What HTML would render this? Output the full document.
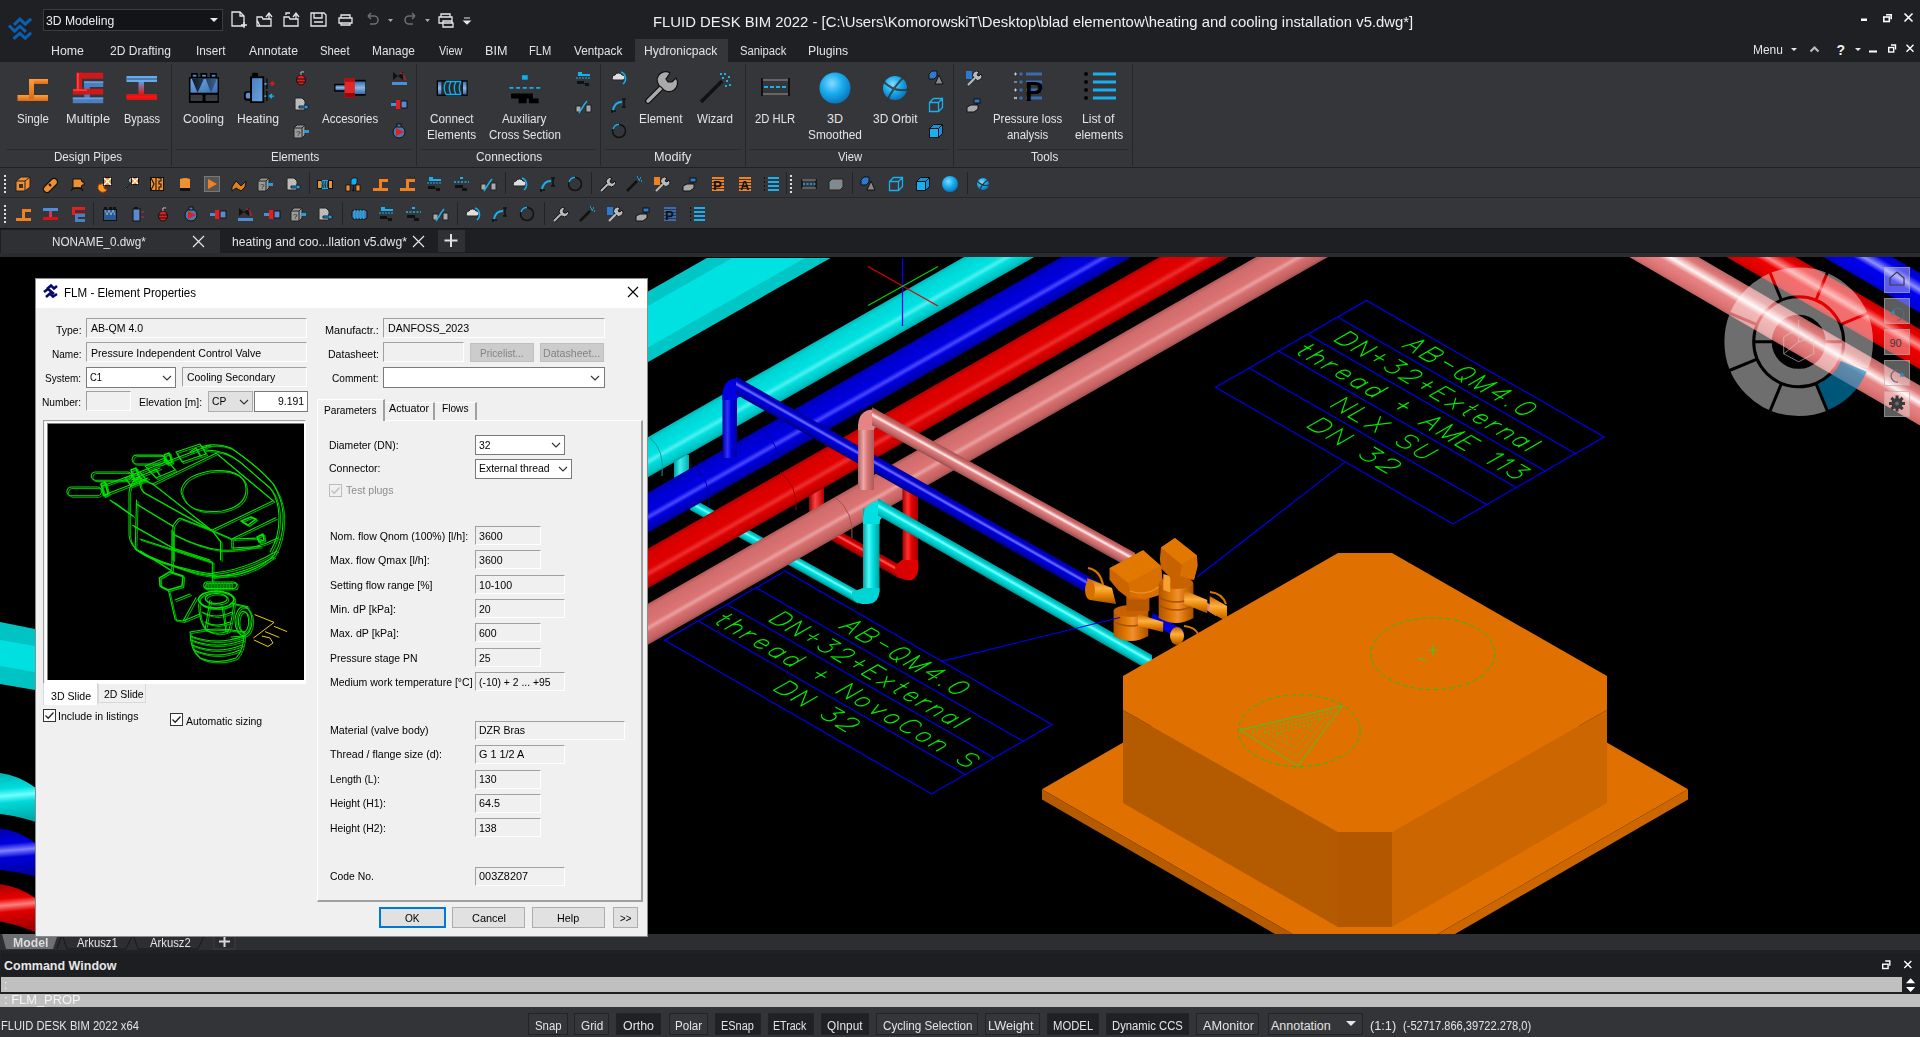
<!DOCTYPE html>
<html><head><meta charset="utf-8"><title>FLUID DESK BIM 2022</title><style>html,body{margin:0;padding:0}
body{width:1920px;height:1037px;overflow:hidden;position:relative;background:#1f2024;font-family:"Liberation Sans",sans-serif}
body>*{position:absolute}
.tx{white-space:nowrap;line-height:1;transform-origin:0 0}
</style></head><body>
<div style="left:0px;top:0px;width:1920px;height:62px;background:#1f2024"></div>
<svg style="left:0px;top:10px" width="45" height="35" viewBox="0 10 45 35">
<g fill="none" stroke="#0a5fb2" stroke-width="3" stroke-linecap="square" stroke-linejoin="miter">
<path d="M15 23.8 L19.9 19.1 L25.2 24.2 L30 19.8"/><path d="M10 26.6 L14.6 31.1 L19.9 26.2 L24.8 30.8"/><path d="M14.6 37.9 L19.9 33.3 L25.2 38.3 L30 33.8"/>
</g></svg>
<div style="left:43px;top:9px;width:178px;height:20px;background:#131418;border:1px solid #3b3c40"></div>
<span class="tx" style="left:46.00px;top:14.00px;font-size:13px;color:#ececec;transform:scaleX(0.9346);">3D Modeling</span>
<svg style="left:210px;top:18px" width="8" height="5"><path d="M0 0 L8 0 L4 4Z" fill="#e8e8e8"/></svg>
<svg style="left:228px;top:8px" width="250" height="24" viewBox="228 8 250 24">
<g fill="none" stroke="#e6e6e6" stroke-width="1.3">
<path d="M232 12 h8 l4 4 v10 h-12z M240 12 v4 h4"/><path d="M244 22 v6 M241 25 h6"/>
<path d="M257 17 h5 l1 2 h8 v7 h-14z M257 20 l3 6"/><path d="M266 17 l3-4 l3 4 M269 13 v6"/>
<path d="M284 17 h5 l1 2 h8 v7 h-14z"/><path d="M293 17 l3-4 l3 4 M296 13 v6" /><path d="M286 15 v-2 h4"/>
<path d="M311 13 h13 l2 2 v11 h-15z M314 13 v5 h8 v-5 M314 22 h9"/>
<path d="M339 18 h13 v5 h-13z M341 18 v-3 h9 v3 M341 23 v2 h9 v-2"/>
</g>
<g fill="none" stroke="#6b6c70" stroke-width="1.6"><path d="M368 16 h6 a4 4 0 0 1 0 8 h-4 M368 16 l3-3 M368 16 l3 3"/><path d="M415 16 h-6 a4 4 0 0 0 0 8 h4 M415 16 l-3-3 M415 16 l-3 3"/></g>
<path d="M388 19 h5 l-2.5 3z M425 19 h5 l-2.5 3z" fill="#aaa"/>
<g fill="none" stroke="#e6e6e6" stroke-width="1.3"><path d="M439 17 h13 v6 h-13z M441 17 v-3 h9 v3 M443 21 h8 l2 2 v4 h-10z"/></g>
<path d="M464 18 h6 M464 21 h6 l-3 3z" stroke="#e6e6e6" fill="#e6e6e6" stroke-width="1.2"/>
</svg>
<span class="tx" style="left:652.79px;top:14.01px;font-size:15.5px;color:#f0f0f0;transform:scaleX(0.9592);">FLUID DESK BIM 2022 - [C:\Users\KomorowskiT\Desktop\blad elementow\heating and cooling installation v5.dwg*]</span>
<svg style="left:1855px;top:8px" width="65" height="20" viewBox="1855 8 65 20">
<rect x="1861" y="18.5" width="6" height="2.5" fill="#fff"/>
<g fill="none" stroke="#fff" stroke-width="1.6"><rect x="1883.8" y="17" width="5.5" height="4.5"/><path d="M1886 14.8 h5.2 v4.5"/>
<path d="M1904.5 13.5 l8 8 M1912.5 13.5 l-8 8"/></g></svg>
<div style="left:635px;top:39px;width:93px;height:23px;background:#34363a"></div>
<span class="tx" style="left:51.01px;top:45.01px;font-size:12.5px;color:#e4e4e4;transform:scaleX(0.9879);">Home</span>
<span class="tx" style="left:110.00px;top:45.01px;font-size:12.5px;color:#e4e4e4;transform:scaleX(0.9641);">2D Drafting</span>
<span class="tx" style="left:196.06px;top:45.01px;font-size:12.5px;color:#e4e4e4;transform:scaleX(0.9419);">Insert</span>
<span class="tx" style="left:249.00px;top:45.01px;font-size:12.5px;color:#e4e4e4;transform:scaleX(0.9782);">Annotate</span>
<span class="tx" style="left:320.00px;top:45.01px;font-size:12.5px;color:#e4e4e4;transform:scaleX(0.9038);">Sheet</span>
<span class="tx" style="left:372.05px;top:45.01px;font-size:12.5px;color:#e4e4e4;transform:scaleX(0.9498);">Manage</span>
<span class="tx" style="left:439.00px;top:45.01px;font-size:12.5px;color:#e4e4e4;transform:scaleX(0.8621);">View</span>
<span class="tx" style="left:484.99px;top:45.01px;font-size:12.5px;color:#e4e4e4;transform:scaleX(1.0091);">BIM</span>
<span class="tx" style="left:529.11px;top:45.01px;font-size:12.5px;color:#e4e4e4;transform:scaleX(0.8903);">FLM</span>
<span class="tx" style="left:574.00px;top:45.01px;font-size:12.5px;color:#e4e4e4;transform:scaleX(0.9391);">Ventpack</span>
<span class="tx" style="left:644.03px;top:45.01px;font-size:12.5px;color:#e4e4e4;transform:scaleX(0.9672);">Hydronicpack</span>
<span class="tx" style="left:740.00px;top:45.01px;font-size:12.5px;color:#e4e4e4;transform:scaleX(0.9009);">Sanipack</span>
<span class="tx" style="left:808.02px;top:45.01px;font-size:12.5px;color:#e4e4e4;transform:scaleX(0.9812);">Plugins</span>
<span class="tx" style="left:1753.04px;top:44.01px;font-size:12.5px;color:#e4e4e4;transform:scaleX(0.9566);">Menu</span>
<svg style="left:1785px;top:40px" width="135" height="20" viewBox="1785 40 135 20">
<path d="M1791 48 h6 l-3 3z M1855 48 h6 l-3 3z" fill="#e6e6e6"/>
<path d="M1810.5 51.5 l4-4 l4 4" fill="none" stroke="#bbb" stroke-width="2.2"/>
<rect x="1869" y="50.5" width="8" height="2" fill="#fff"/>
<g fill="none" stroke="#fff" stroke-width="1.4"><rect x="1888.7" y="47.5" width="5" height="4.5"/><path d="M1891 45 h4.5 v4.5"/><path d="M1906.5 44.8 l7 7 M1913.5 44.8 l-7 7"/></g>
</svg>
<span class="tx" style="left:1836.50px;top:43.01px;font-size:14px;color:#f0f0f0;font-weight:bold;">?</span>
<div style="left:0px;top:62px;width:1920px;height:106px;background:#34363a"></div>
<div style="left:0px;top:167px;width:1920px;height:1px;background:#1f2024"></div>
<div style="left:171px;top:64px;width:1px;height:102px;background:#25262a"></div>
<div style="left:416px;top:64px;width:1px;height:102px;background:#25262a"></div>
<div style="left:600px;top:64px;width:1px;height:102px;background:#25262a"></div>
<div style="left:745px;top:64px;width:1px;height:102px;background:#25262a"></div>
<div style="left:953px;top:64px;width:1px;height:102px;background:#25262a"></div>
<div style="left:1132px;top:64px;width:1px;height:102px;background:#25262a"></div>
<div style="left:6px;top:149px;width:162px;height:1px;background:#2a2b2f"></div>
<div style="left:175px;top:149px;width:238px;height:1px;background:#2a2b2f"></div>
<div style="left:420px;top:149px;width:177px;height:1px;background:#2a2b2f"></div>
<div style="left:604px;top:149px;width:138px;height:1px;background:#2a2b2f"></div>
<div style="left:749px;top:149px;width:201px;height:1px;background:#2a2b2f"></div>
<div style="left:957px;top:149px;width:172px;height:1px;background:#2a2b2f"></div>
<span class="tx" style="left:54.07px;top:151.01px;font-size:12.5px;color:#e4e4e4;transform:scaleX(0.9254);">Design Pipes</span>
<span class="tx" style="left:271.08px;top:151.01px;font-size:12.5px;color:#e4e4e4;transform:scaleX(0.9242);">Elements</span>
<span class="tx" style="left:476.00px;top:151.01px;font-size:12.5px;color:#e4e4e4;transform:scaleX(0.9532);">Connections</span>
<span class="tx" style="left:653.99px;top:151.01px;font-size:12.5px;color:#e4e4e4;transform:scaleX(1.0119);">Modify</span>
<span class="tx" style="left:838.00px;top:151.01px;font-size:12.5px;color:#e4e4e4;transform:scaleX(0.8980);">View</span>
<span class="tx" style="left:1031.00px;top:151.01px;font-size:12.5px;color:#e4e4e4;transform:scaleX(0.9333);">Tools</span>
<span class="tx" style="left:17.00px;top:113.00px;font-size:12.5px;color:#e4e4e4;transform:scaleX(0.9197);">Single</span>
<span class="tx" style="left:65.98px;top:113.00px;font-size:12.5px;color:#e4e4e4;transform:scaleX(1.0209);">Multiple</span>
<span class="tx" style="left:124.12px;top:113.00px;font-size:12.5px;color:#e4e4e4;transform:scaleX(0.8807);">Bypass</span>
<span class="tx" style="left:183.00px;top:113.00px;font-size:12.5px;color:#e4e4e4;transform:scaleX(0.9661);">Cooling</span>
<span class="tx" style="left:237.03px;top:113.00px;font-size:12.5px;color:#e4e4e4;transform:scaleX(0.9731);">Heating</span>
<span class="tx" style="left:322.00px;top:113.00px;font-size:12.5px;color:#e4e4e4;transform:scaleX(0.9198);">Accesories</span>
<span class="tx" style="left:430.00px;top:113.00px;font-size:12.5px;color:#e4e4e4;transform:scaleX(0.9345);">Connect</span>
<span class="tx" style="left:502.00px;top:113.00px;font-size:12.5px;color:#e4e4e4;transform:scaleX(0.9378);">Auxiliary</span>
<span class="tx" style="left:639.05px;top:113.00px;font-size:12.5px;color:#e4e4e4;transform:scaleX(0.9475);">Element</span>
<span class="tx" style="left:697.00px;top:113.00px;font-size:12.5px;color:#e4e4e4;transform:scaleX(0.9245);">Wizard</span>
<span class="tx" style="left:755.00px;top:113.00px;font-size:12.5px;color:#e4e4e4;transform:scaleX(0.9003);">2D HLR</span>
<span class="tx" style="left:827.00px;top:113.00px;font-size:12.5px;color:#e4e4e4;">3D</span>
<span class="tx" style="left:873.00px;top:113.00px;font-size:12.5px;color:#e4e4e4;transform:scaleX(0.9561);">3D Orbit</span>
<span class="tx" style="left:993.09px;top:113.00px;font-size:12.5px;color:#e4e4e4;transform:scaleX(0.9131);">Pressure loss</span>
<span class="tx" style="left:1082.03px;top:113.00px;font-size:12.5px;color:#e4e4e4;transform:scaleX(0.9733);">List of</span>
<span class="tx" style="left:427.06px;top:129.00px;font-size:12.5px;color:#e4e4e4;transform:scaleX(0.9438);">Elements</span>
<span class="tx" style="left:489.00px;top:129.00px;font-size:12.5px;color:#e4e4e4;transform:scaleX(0.9248);">Cross Section</span>
<span class="tx" style="left:808.00px;top:129.00px;font-size:12.5px;color:#e4e4e4;transform:scaleX(0.9469);">Smoothed</span>
<span class="tx" style="left:1007.00px;top:129.00px;font-size:12.5px;color:#e4e4e4;transform:scaleX(0.9129);">analysis</span>
<span class="tx" style="left:1075.00px;top:129.00px;font-size:12.5px;color:#e4e4e4;transform:scaleX(0.9511);">elements</span>
<div style="left:0px;top:168px;width:1920px;height:60px;background:#34363a"></div>
<div style="left:0px;top:197px;width:1920px;height:1px;background:#27282c"></div>
<div style="left:0px;top:228px;width:1920px;height:2px;background:#141518"></div>
<div style="left:0px;top:229px;width:1920px;height:27px;background:#1e1f23"></div>
<div style="left:1px;top:230px;width:219px;height:23px;background:#2f3034"></div>
<div style="left:438px;top:230px;width:27px;height:22px;background:#2f3034"></div>
<span class="tx" style="left:52.06px;top:236.00px;font-size:12.5px;color:#e4e4e4;transform:scaleX(0.9378);">NONAME_0.dwg*</span>
<span class="tx" style="left:231.60px;top:236.00px;font-size:12.5px;color:#e4e4e4;transform:scaleX(0.9716);">heating and coo...llation v5.dwg*</span>
<svg style="left:180px;top:230px" width="300" height="24" viewBox="180 230 300 24">
<g stroke="#e6e6e6" stroke-width="1.2" fill="none"><path d="M193 236 l11 11 M204 236 l-11 11"/><path d="M413 236 l11 11 M424 236 l-11 11"/></g>
<path d="M451 234 v13 M444.5 240.5 h13" stroke="#e0e0e0" stroke-width="2"/></svg>
<div style="left:465px;top:252px;width:1455px;height:1px;background:#17181b"></div>
<div style="left:0px;top:253px;width:1920px;height:4px;background:#2b2c30"></div>
<div style="left:0px;top:257px;width:1920px;height:677px;background:#000"></div>
<div style="left:0px;top:934px;width:1920px;height:16px;background:#2d2e32"></div>
<svg style="left:0px;top:934px" width="240" height="16" viewBox="0 934 240 16">
<path d="M2 934 L6 949 H53 L58 934Z" fill="#6e6f73"/>
<g fill="none" stroke="#19191c" stroke-width="1"><path d="M57 949 L62 934 L67 949 H126 L133 934"/><path d="M133 934 L138 949 H198 L205 934"/></g>
<rect x="214" y="934" width="21" height="15" fill="#2a2b2e" stroke="#3d3e42"/>
<path d="M224.5 936 v11 M219 941.5 h11" stroke="#d8d8d8" stroke-width="2"/></svg>
<span class="tx" style="left:13.00px;top:937.01px;font-size:12px;color:#dcdcdc;font-weight:bold;transform:scaleX(1.0195);">Model</span>
<span class="tx" style="left:77.00px;top:937.01px;font-size:12px;color:#e4e4e4;transform:scaleX(0.9388);">Arkusz1</span>
<span class="tx" style="left:150.00px;top:937.01px;font-size:12px;color:#e4e4e4;transform:scaleX(0.9388);">Arkusz2</span>
<div style="left:0px;top:950px;width:1920px;height:58px;background:#202125"></div>
<div style="left:1px;top:953px;width:1919px;height:23px;background:#1d1e21"></div>
<span class="tx" style="left:4.00px;top:960.01px;font-size:12.5px;color:#e8e8e8;font-weight:bold;">Command Window</span>
<div style="left:1px;top:977px;width:1901px;height:15px;background:#c0c0c0"></div>
<div style="left:1902px;top:977px;width:18px;height:15px;background:#1d1e21"></div>
<div style="left:0px;top:994px;width:1920px;height:13px;background:#c0c0c0"></div>
<span class="tx" style="left:4.01px;top:993.00px;font-size:13px;color:#f4f4f4;transform:scaleX(0.9917);">: FLM_PROP</span>
<span class="tx" style="left:4.00px;top:979.01px;font-size:12px;color:#f0f0f0;">:</span>
<svg style="left:1875px;top:955px" width="45" height="40" viewBox="1875 955 45 40">
<g fill="none" stroke="#fff" stroke-width="1.4"><rect x="1882.7" y="964.2" width="5.4" height="4.3"/><path d="M1885.2 961 h4.6 v4.8"/><path d="M1904.3 961 l7 7 M1911.3 961 l-7 7"/></g>
<path d="M1906 983.2 l4.6-5 l4.6 5z M1906 987 l4.6 5 l4.6-5z" fill="#fff"/></svg>
<div style="left:0px;top:1007px;width:1920px;height:30px;background:#323438"></div>
<span class="tx" style="left:1.11px;top:1020.01px;font-size:12.5px;color:#e4e4e4;transform:scaleX(0.8938);">FLUID DESK BIM 2022 x64</span>
<div style="left:528px;top:1013px;width:40px;height:22px;background:#35363a;border:1px solid #222327;box-sizing:border-box"></div>
<div style="left:574px;top:1013px;width:35px;height:22px;background:#35363a;border:1px solid #222327;box-sizing:border-box"></div>
<div style="left:616px;top:1013px;width:45px;height:22px;background:#202125;border:1px solid #222327;box-sizing:border-box"></div>
<div style="left:669px;top:1013px;width:39px;height:22px;background:#35363a;border:1px solid #222327;box-sizing:border-box"></div>
<div style="left:715px;top:1013px;width:46px;height:22px;background:#202125;border:1px solid #222327;box-sizing:border-box"></div>
<div style="left:768px;top:1013px;width:46px;height:22px;background:#202125;border:1px solid #222327;box-sizing:border-box"></div>
<div style="left:821px;top:1013px;width:48px;height:22px;background:#202125;border:1px solid #222327;box-sizing:border-box"></div>
<div style="left:876px;top:1013px;width:102px;height:22px;background:#35363a;border:1px solid #222327;box-sizing:border-box"></div>
<div style="left:985px;top:1013px;width:55px;height:22px;background:#35363a;border:1px solid #222327;box-sizing:border-box"></div>
<div style="left:1047px;top:1013px;width:52px;height:22px;background:#202125;border:1px solid #222327;box-sizing:border-box"></div>
<div style="left:1106px;top:1013px;width:83px;height:22px;background:#202125;border:1px solid #222327;box-sizing:border-box"></div>
<div style="left:1196px;top:1013px;width:63px;height:22px;background:#35363a;border:1px solid #222327;box-sizing:border-box"></div>
<span class="tx" style="left:534.60px;top:1020.00px;font-size:12.5px;color:#e4e4e4;transform:scaleX(0.9097);">Snap</span>
<span class="tx" style="left:580.70px;top:1020.00px;font-size:12.5px;color:#e4e4e4;transform:scaleX(0.9424);">Grid</span>
<span class="tx" style="left:623.00px;top:1020.00px;font-size:12.5px;color:#e4e4e4;transform:scaleX(0.9901);">Ortho</span>
<span class="tx" style="left:675.07px;top:1020.00px;font-size:12.5px;color:#e4e4e4;transform:scaleX(0.9280);">Polar</span>
<span class="tx" style="left:721.13px;top:1020.00px;font-size:12.5px;color:#e4e4e4;transform:scaleX(0.8748);">ESnap</span>
<span class="tx" style="left:773.15px;top:1020.00px;font-size:12.5px;color:#e4e4e4;transform:scaleX(0.8489);">ETrack</span>
<span class="tx" style="left:827.00px;top:1020.00px;font-size:12.5px;color:#e4e4e4;transform:scaleX(0.9461);">QInput</span>
<span class="tx" style="left:882.50px;top:1020.00px;font-size:12.5px;color:#e4e4e4;transform:scaleX(0.9330);">Cycling Selection</span>
<span class="tx" style="left:987.98px;top:1020.00px;font-size:12.5px;color:#e4e4e4;transform:scaleX(1.0174);">LWeight</span>
<span class="tx" style="left:1052.80px;top:1020.00px;font-size:12.5px;color:#e4e4e4;transform:scaleX(0.9034);">MODEL</span>
<span class="tx" style="left:1112.10px;top:1020.00px;font-size:12.5px;color:#e4e4e4;transform:scaleX(0.9022);">Dynamic CCS</span>
<span class="tx" style="left:1202.60px;top:1020.00px;font-size:12.5px;color:#e4e4e4;transform:scaleX(1.0209);">AMonitor</span>
<div style="left:1268px;top:1013px;width:95px;height:22px;background:#35363a;border:1px solid #222327;box-sizing:border-box"></div>
<svg style="left:1345px;top:1020px" width="12" height="8"><path d="M1 1 h10 l-5 5z" fill="#e6e6e6"/></svg>
<span class="tx" style="left:1271.00px;top:1020.01px;font-size:12.5px;color:#e4e4e4;">Annotation</span>
<span class="tx" style="left:1370.00px;top:1020.01px;font-size:12.5px;color:#e4e4e4;transform:scaleX(1.0180);">(1:1)</span>
<span class="tx" style="left:1403.00px;top:1020.01px;font-size:12.5px;color:#e4e4e4;transform:scaleX(0.8864);">(-52717.866,39722.278,0)</span>
<svg style="left:0;top:62px" width="1140" height="166" viewBox="0 62 1140 166"><defs>
<linearGradient id="org" x1="0" y1="0" x2="0" y2="1"><stop offset="0" stop-color="#f8a040"/><stop offset="1" stop-color="#e06810"/></linearGradient>
<linearGradient id="byp" x1="0" y1="0" x2="0" y2="1"><stop offset="0" stop-color="#5a9ae0"/><stop offset="1" stop-color="#e81010"/></linearGradient>
<linearGradient id="cool" x1="0" y1="0" x2="1" y2="0"><stop offset="0" stop-color="#0f1a28"/><stop offset="1" stop-color="#3a6090"/></linearGradient><linearGradient id="cool2" x1="0" y1="0" x2="1" y2="1"><stop offset="0" stop-color="#70a8e8"/><stop offset="1" stop-color="#3a70b0"/></linearGradient><linearGradient id="heat2" x1="0" y1="0" x2="1" y2="1"><stop offset="0" stop-color="#4a80c0"/><stop offset="1" stop-color="#6aa0d8"/></linearGradient>
<linearGradient id="heat" x1="0" y1="0" x2="1" y2="0"><stop offset="0" stop-color="#3a6aa8"/><stop offset="0.5" stop-color="#7aaae0"/><stop offset="1" stop-color="#3a6aa8"/></linearGradient>
<linearGradient id="vblue" x1="0" y1="0" x2="0" y2="1"><stop offset="0" stop-color="#3a6aa8"/><stop offset="0.5" stop-color="#8ab8e8"/><stop offset="1" stop-color="#3a6aa8"/></linearGradient><radialGradient id="sph" cx="0.4" cy="0.35" r="0.65"><stop offset="0" stop-color="#8ad8ff"/><stop offset="0.5" stop-color="#1ab0f0"/><stop offset="1" stop-color="#0a78c0"/></radialGradient>
</defs><rect x="17.5" y="95" width="30.5" height="6" fill="url(#org)"/><rect x="29" y="79" width="19" height="5" fill="url(#org)"/><rect x="29" y="79" width="5" height="20" fill="url(#org)"/><g fill="#4a80c0"><rect x="84.2" y="81.3" width="19" height="5.7"/><rect x="84.2" y="81.3" width="5.7" height="9"/><rect x="84.2" y="93" width="5.7" height="5"/><rect x="72.8" y="97.4" width="30.4" height="5.8"/></g><g fill="#6aa0e0"><rect x="72.8" y="97.6" width="30.4" height="1.6"/><rect x="84.2" y="81.5" width="19" height="1.5"/></g><g fill="#d01818"><rect x="76.2" y="72.7" width="27" height="6"/><rect x="76.2" y="72.7" width="5.7" height="20"/><rect x="72.8" y="88.8" width="30.4" height="5.8"/></g><g fill="#ff5050" opacity="0.8"><rect x="77" y="73" width="1.8" height="18"/><rect x="73" y="89.3" width="14" height="1.5"/></g><rect x="126.5" y="76" width="30.5" height="6" fill="#6aaae8"/><rect x="126.5" y="78.3" width="30.5" height="1.4" fill="#3a6aa0"/><rect x="138.5" y="82" width="5.5" height="12.5" fill="url(#byp)"/><rect x="126.5" y="94" width="30.5" height="6" fill="#d81818"/><rect x="126.5" y="96" width="30.5" height="2" fill="#ff1010"/><rect x="188.9" y="77.1" width="30" height="25.8" fill="#000"/><rect x="191" y="73" width="6.8" height="5" fill="#000"/><rect x="200.4" y="73" width="6.8" height="5" fill="#000"/><rect x="210" y="73" width="6.8" height="5" fill="#000"/><rect x="192.8" y="74.8" width="3.6" height="1.8" fill="#5a90d0"/><rect x="202.2" y="74.8" width="3.6" height="1.8" fill="#5a90d0"/><rect x="211.8" y="74.8" width="3.6" height="1.8" fill="#5a90d0"/><rect x="190.5" y="78.7" width="27.1" height="14" fill="url(#cool2)"/><path d="M191.8 78.7 L197.6 92.7 L204 78.7Z M205.6 78.7 L211 92.7 L217 78.7Z" fill="url(#cool)"/><rect x="190.5" y="94.8" width="12.2" height="6.2" fill="#3a3b3f"/><rect x="205.4" y="94.8" width="12.2" height="6.2" fill="#3a3b3f"/><path d="M202 94.8 L204 97.8 L206 94.8Z M202 101 L204 98 L206 101Z" fill="#000"/><rect x="250.1" y="76.3" width="14.1" height="26.6" fill="#000"/><rect x="252" y="78.2" width="10.4" height="23.1" fill="url(#heat2)"/><rect x="252.2" y="72.7" width="5.8" height="4" rx="1" fill="#000"/><path d="M250.4 91.2 h-3.5 a3 3 0 0 0 -3 3 v3.5 a3 3 0 0 0 3 3 h3.5z" fill="#000"/><path d="M250 92.8 h-2.6 a1.6 1.6 0 0 0 -1.6 1.6 v2.5 a1.6 1.6 0 0 0 1.6 1.6 h2.6z" fill="#5a90d0"/><rect x="266.3" y="78.5" width="1.2" height="10.5" fill="#000"/><rect x="266.3" y="91" width="1.2" height="10" fill="#000"/><rect x="264.2" y="82" width="2.2" height="2.4" fill="#000"/><rect x="264.2" y="95" width="2.2" height="2.4" fill="#000"/><circle cx="265.5" cy="83.7" r="1.3" fill="#5a90d0"/><circle cx="265.3" cy="96.2" r="1.1" fill="#5a90d0"/><path d="M269.4 83.6 h3 M271.5 81.6 l2.5 2 l-2.5 2" stroke="#e01818" stroke-width="1.4" fill="none"/><path d="M274.1 96.1 h-3 M272 94.1 l-2.5 2 l2.5 2" stroke="#10b0f0" stroke-width="1.4" fill="none"/><rect x="334.2" y="83.8" width="11" height="7.9" fill="#000"/><rect x="335.5" y="85.2" width="9.5" height="5" fill="url(#vblue)"/><rect x="354" y="79.8" width="11.6" height="15.9" fill="#000"/><rect x="354.2" y="81.5" width="11" height="12.5" fill="url(#vblue)"/><rect x="344.5" y="78" width="10.3" height="19.5" fill="#e02828"/><rect x="344.5" y="78" width="10.3" height="3.8" fill="#b01010"/><rect x="344.5" y="93" width="10.3" height="4.5" fill="#900808"/><rect x="436.7" y="80.3" width="30.9" height="15.5" fill="#000"/><rect x="438" y="81.6" width="3.5" height="12.9" fill="url(#vblue)"/><rect x="463" y="81.6" width="3.5" height="12.9" fill="url(#vblue)"/><rect x="442" y="81.6" width="20.5" height="12.9" fill="#2a2b2e"/><path d="M446 81.5 q-3.5 6.5 0 13 M451 81.5 q-3.5 6.5 0 13 M456 81.5 q-3.5 6.5 0 13 M461 81.5 q-3.5 6.5 0 13 M446 81.5 h15 M446 94.5 h15" stroke="#10b0f0" stroke-width="1.3" fill="none"/><rect x="522" y="75.2" width="5.7" height="4.5" fill="#10b0f0"/><path d="M509.4 87.8 h31" stroke="#10b0f0" stroke-width="1.8" stroke-dasharray="4 2.7"/><path d="M511.1 93.5 h21.8 v5.1 h5.7 v4.6 h-9.7 v-4.6 h-2.3 v4.6 h-8 v-4.6 h-7.5z" fill="#000"/><path d="M648 101 L663 86" stroke="#111" stroke-width="6" stroke-linecap="round"/><path d="M648 101 L663 86" stroke="#aaa" stroke-width="3.5" stroke-linecap="round"/><path d="M661 87 a8 8 0 0 1 9 -14 l-4 6 l2 3 l4 0 l4 -4 a8 8 0 0 1 -14 10z" fill="#aaa" stroke="#111" stroke-width="1.2"/><path d="M701 102 L722 81" stroke="#111" stroke-width="3.5"/><g fill="#1ab0f0"><rect x="720" y="73" width="2" height="2"/><rect x="724" y="73" width="2" height="2"/><rect x="728" y="76" width="2" height="2"/><rect x="722" y="77" width="2" height="2"/><rect x="726" y="80" width="2" height="2"/><rect x="729" y="84" width="2" height="2"/><rect x="725" y="85" width="2" height="2"/></g><path d="M762 78 v18 M789 78 v18" stroke="#111" stroke-width="2"/><path d="M763 80 h25 M763 94 h25" stroke="#777" stroke-width="1.5"/><path d="M764 87 h24" stroke="#1ab0f0" stroke-width="1.8" stroke-dasharray="4 2"/><circle cx="835" cy="88" r="15.5" fill="url(#sph)"/><circle cx="895" cy="88" r="12" fill="url(#sph)"/><path d="M882 80 q13 14 27 9 M887 101 q6 -14 19 -26" stroke="#333" stroke-width="2" fill="none" opacity="0.85"/><path d="M1026 74 h16 M1026 82 h16 M1026 90 h16 M1026 98 h16" stroke="#3a6ab0" stroke-width="3"/><g fill="#3a6ab0"><circle cx="1021" cy="74" r="1.8"/><circle cx="1021" cy="82" r="1.8"/><circle cx="1021" cy="90" r="1.8"/><circle cx="1021" cy="98" r="1.8"/></g><path d="M1014 74 h3 M1015.5 72.5 v3 M1014 82 h3 M1014 90 h3 M1015.5 88.5 v3 M1014 97 l3 2 M1017 97 l-3 2" stroke="#ddd" stroke-width="0.9"/><text x="1025" y="101" font-size="27" font-weight="bold" font-family="Liberation Sans" fill="#000">P</text><path d="M1093 74 h23 M1093 82 h23 M1093 90 h23 M1093 98 h23" stroke="#1ab0f0" stroke-width="3"/><g fill="#000"><circle cx="1086" cy="74" r="2"/><circle cx="1086" cy="82" r="2"/><circle cx="1086" cy="90" r="2"/><circle cx="1086" cy="98" r="2"/></g><g transform="translate(293,70)"><ellipse cx="8" cy="10" rx="4.5" ry="5" fill="#e02020" stroke="#111"/><path d="M4 9 h8 M4 12 h8" stroke="#111"/><path d="M8 5 v-3 h3" stroke="#ccc"/></g><g transform="translate(293,96)"><path d="M2 2 h7 l3 3 v9 h-10z" fill="#bbb" stroke="#222"/><path d="M6 10 h6 v-2 l4 3 l-4 3 v-2 h-6z" fill="#2a9ad8" stroke="#123"/></g><g transform="translate(293,123)"><path d="M1 5 L4 2 H12 V12 L9 15 H1Z" fill="#9a9a9a" stroke="#222"/><path d="M1 5 H9 V15 M9 5 L12 2" fill="none" stroke="#222"/><text x="3" y="13" font-size="8" font-family="Liberation Sans" fill="#222">?</text><rect x="11" y="7" width="5" height="3" fill="#2a9ad8"/></g><g transform="translate(391,70)"><path d="M2 2 l5 4 l-5 4z M12 2 l-5 4 l5 4z" fill="#111"/><path d="M9 3 q5 1 5 7" stroke="#e02020" fill="none"/><rect x="1" y="12" width="15" height="3" fill="#4a8fd8"/></g><g transform="translate(391,96)"><rect x="0" y="7" width="5" height="3" fill="#4a8fd8"/><rect x="5" y="4" width="5" height="9" fill="#e02020"/><rect x="10" y="5" width="6" height="7" fill="#5a8ad0" stroke="#111"/></g><g transform="translate(391,123)"><circle cx="8" cy="9" r="6" fill="#4a7ab0" stroke="#111"/><path d="M5 5 L13 9 L5 13Z" fill="#e02020"/><rect x="6" y="1" width="4" height="3" fill="#4a7ab0" stroke="#111"/></g><g transform="translate(575,71)"><path d="M3 1 h4 v2 h8 v2 h-12z" fill="#1ab0f0"/><path d="M1 7 h15" stroke="#1ab0f0" stroke-width="1.2" stroke-dasharray="2 1"/><path d="M2 10 h7 v2 h5 v3 h-4 v-2 h-8z" fill="#111"/></g><g transform="translate(575,98)"><rect x="1" y="8" width="5" height="6" fill="#aaa" stroke="#222"/><rect x="11" y="7" width="5" height="7" fill="#aaa" stroke="#222"/><path d="M4 15 L9 7 L12 3" stroke="#1ab0f0" stroke-width="1.5" fill="none"/></g><g transform="translate(611,70)"><path d="M2 10 a3 3 0 0 1 2 -5 a4 4 0 0 1 7 0 a2.5 2.5 0 0 1 1 5z" fill="#ddd" stroke="#222"/><path d="M10 2 a7 7 0 0 1 2 12" stroke="#1ab0f0" fill="none" stroke-width="1.5"/></g><g transform="translate(611,97)"><path d="M2 14 q1 -9 9 -9" stroke="#1ab0f0" stroke-width="2" fill="none"/><path d="M13 2 v8 M11 2 h4 M11 10 h4 M1 13 v3 M0 14 h5" stroke="#111" stroke-width="1.5"/></g><g transform="translate(611,123)"><circle cx="8" cy="8" r="6.5" fill="none" stroke="#111" stroke-width="1.5"/><path d="M2 6 a6.5 6.5 0 0 1 6 -4.5" stroke="#1ab0f0" stroke-width="1.6" fill="none"/></g><g transform="translate(928,70)"><path d="M1 4 L4 1 H9 V6 L6 9 H1Z" fill="#2a7ad0" stroke="#111"/><path d="M11 5 L15 14 H7Z" fill="#888" stroke="#111"/></g><g transform="translate(928,97)"><path d="M1.5 5.5 L5.5 1.5 H14.5 V10.5 L10.5 14.5 H1.5Z M1.5 5.5 H10.5 V14.5 M10.5 5.5 L14.5 1.5" fill="none" stroke="#1ab0f0" stroke-width="1.3"/></g><g transform="translate(928,123)"><path d="M1.5 5.5 L5.5 1.5 H14.5 V10.5 L10.5 14.5 H1.5Z" fill="#1a90d8" stroke="#111"/><path d="M1.5 5.5 H10.5 V14.5 M10.5 5.5 L14.5 1.5" fill="none" stroke="#111"/><path d="M2 6 h8 v8 h-8z" fill="#1ab0f0"/></g><g transform="translate(965,70)"><rect x="1" y="1" width="6" height="8" fill="#2a7ad0"/><path d="M3 15 L10 8" stroke="#bbb" stroke-width="2"/><path d="M9 8 a3.5 3.5 0 0 1 5 -6 l-2 3 l2 1 l2 -2 a3.5 3.5 0 0 1 -6 5" fill="#bbb" stroke="#111"/></g><g transform="translate(965,97)"><rect x="9" y="2" width="6" height="4" fill="#2a7ad0" stroke="#111"/><path d="M12 6 v3" stroke="#111"/><path d="M2 10 L6 8 H13 V12 L9 15 H2Z" fill="#aaa" stroke="#111"/></g><path d="M5 175 v18" stroke="#e0e0e0" stroke-width="2" stroke-dasharray="2 2"/><path d="M5 205 v18" stroke="#e0e0e0" stroke-width="2" stroke-dasharray="2 2"/><g transform="translate(15,176)"><path d="M1 5 L6 1 H15 V11 L10 15 H1Z" fill="#f09030" stroke="#222" stroke-width="1"/><path d="M1 5 H10 V15 M10 5 L15 1" fill="none" stroke="#222"/><rect x="4" y="8" width="4" height="4" fill="#333"/></g><g transform="translate(42,176)"><path d="M2.5 10.5 L9.5 3.5 a3.5 3.5 0 0 1 5 5 L7.5 15.5 a3.5 3.5 0 0 1 -5 -5Z" fill="#f09030" stroke="#111" stroke-width="1.2"/><path d="M7 8 l2 2" stroke="#111" stroke-width="2"/></g><g transform="translate(69,176)"><path d="M4 3 h8 l1 3 h2 v3 h-2 l-1 3 h-8 z" fill="#f09030" stroke="#111"/><path d="M3 13 q5 -2 10 0 M4 12 l-2 3 M12 12 l2 3" stroke="#111" stroke-width="1.3" fill="none"/></g><g transform="translate(96,176)"><path d="M3 8 q-3 5 2 8 q5 1 6 -3 q-2 1 -3 -1 q1 -3 -2 -5 q0 2 -3 1z" fill="#f0a020" stroke="#c03000"/><rect x="7.5" y="1.5" width="8" height="8" fill="#f09030" stroke="#111"/><path d="M8 2 l7 7 M15 2 l-7 7" stroke="#fff" stroke-width="1.2"/></g><g transform="translate(123,176)"><path d="M1 14 l6 -6 l-2 -4 l3 -3 l1 4 l-7 10z" fill="#aaa" stroke="#222"/><rect x="8.5" y="1.5" width="7" height="7" fill="#f09030" stroke="#111"/><path d="M9 2 l6 6 M15 2 l-6 6" stroke="#fff" stroke-width="1.2"/></g><g transform="translate(149,176)"><rect x="1.5" y="1.5" width="13" height="13" fill="#f09030" stroke="#111"/><path d="M2 2 l3 6 l-3 6 M7 2 v12 M9 2 h3 v3 h-2 v3 h2 v3 h-2 v3" stroke="#111" fill="none" stroke-width="1.1"/></g><g transform="translate(177,176)"><path d="M3 3 q5 -2 10 0 v10 h-10z" fill="#f09030"/><rect x="3" y="12" width="10" height="3" fill="#111"/></g><g transform="translate(204,176)"><rect x="0.5" y="0.5" width="15" height="15" fill="#555" stroke="#777"/><path d="M4 3 L13 8 L4 13Z" fill="#f08020"/></g><g transform="translate(231,176)"><path d="M1 11 l4 -6 l5 5 l5 -5 l-1 6 l-4 4 l-5 -3 l-4 3z" fill="#e08020" stroke="#111"/></g><g transform="translate(257,176)"><path d="M1 5 L4 2 H12 V12 L9 15 H1Z" fill="#9a9a9a" stroke="#222"/><path d="M1 5 H9 V15 M9 5 L12 2" fill="none" stroke="#222"/><text x="3" y="13" font-size="8" font-family="Liberation Sans" fill="#222">?</text><rect x="11" y="7" width="5" height="3" fill="#2a9ad8"/></g><g transform="translate(285,176)"><path d="M2 2 h7 l3 3 v9 h-10z" fill="#bbb" stroke="#222"/><path d="M6 10 h6 v-2 l4 3 l-4 3 v-2 h-6z" fill="#2a9ad8" stroke="#123"/></g><path d="M309.5 172 V194" stroke="#222327"/><g transform="translate(317,176)"><rect x="0.5" y="4.5" width="4" height="8" fill="#f09030" stroke="#111"/><rect x="11.5" y="4.5" width="4" height="8" fill="#f09030" stroke="#111"/><path d="M5 5 q-1.5 3.5 0 7 M7.5 5 q-1.5 3.5 0 7 M10 5 q-1.5 3.5 0 7 M5 4.5 h6 M5 12.5 h6" stroke="#10b0f0" stroke-width="1.1" fill="none"/></g><g transform="translate(345,176)"><path d="M6 4 L8 2 H12 V7 L10 9 H6Z" fill="#10b0f0" stroke="#111" stroke-width="0.8"/><rect x="1" y="9" width="4" height="6" fill="#f09030" stroke="#111" stroke-width="0.8"/><rect x="11" y="9" width="4" height="6" fill="#f09030" stroke="#111" stroke-width="0.8"/><path d="M8.5 9 v6 M7 13.5 l1.5 2 l1.5 -2" stroke="#111" fill="none"/></g><g transform="translate(372,176)"><path d="M7 3 h9 v3 h-6 v6 h6 v3 h-15 v-3 h6z" fill="#f08020"/></g><g transform="translate(399,176)"><path d="M7 3 h9 v3 h-6 v6 h6 v3 h-15 v-3 h6z" fill="#f08020"/><path d="M9 1 h7" stroke="#222" stroke-dasharray="1 1"/></g><g transform="translate(426,176)"><path d="M3 1 h4 v2 h8 v2 h-12z" fill="#1ab0f0"/><path d="M1 7 h15" stroke="#1ab0f0" stroke-width="1.2" stroke-dasharray="2 1"/><path d="M2 10 h7 v2 h5 v3 h-4 v-2 h-8z" fill="#111"/></g><g transform="translate(453,176)"><rect x="7" y="1" width="3" height="2" fill="#1ab0f0"/><path d="M1 6 h15" stroke="#1ab0f0" stroke-width="1.5" stroke-dasharray="2 1.5"/><path d="M2 9 h8 v3 h4 v3 h-5 v-3 h-7z" fill="#111"/></g><g transform="translate(480,176)"><rect x="1" y="8" width="5" height="6" fill="#aaa" stroke="#222"/><rect x="11" y="7" width="5" height="7" fill="#aaa" stroke="#222"/><path d="M4 15 L9 7 L12 3" stroke="#1ab0f0" stroke-width="1.5" fill="none"/></g><path d="M505.5 172 V194" stroke="#222327"/><g transform="translate(512,176)"><path d="M2 10 a3 3 0 0 1 2 -5 a4 4 0 0 1 7 0 a2.5 2.5 0 0 1 1 5z" fill="#ddd" stroke="#222"/><path d="M10 2 a7 7 0 0 1 2 12" stroke="#1ab0f0" fill="none" stroke-width="1.5"/></g><g transform="translate(540,176)"><path d="M2 14 q1 -9 9 -9" stroke="#1ab0f0" stroke-width="2" fill="none"/><path d="M13 2 v8 M11 2 h4 M11 10 h4 M1 13 v3 M0 14 h5" stroke="#111" stroke-width="1.5"/></g><g transform="translate(567,176)"><circle cx="8" cy="8" r="6.5" fill="none" stroke="#111" stroke-width="1.5"/><path d="M2 6 a6.5 6.5 0 0 1 6 -4.5" stroke="#1ab0f0" stroke-width="1.6" fill="none"/></g><path d="M591.5 172 V194" stroke="#222327"/><g transform="translate(599,176)"><path d="M2 15 L9 8" stroke="#111" stroke-width="3.5"/><path d="M2 15 L9 8" stroke="#bbb" stroke-width="2"/><path d="M8 8 a4 4 0 0 1 5 -6 l-2 3 l1 2 l2 0 l2 -2 a4 4 0 0 1 -6 5" fill="#bbb" stroke="#111"/></g><g transform="translate(626,176)"><path d="M1 15 L11 5" stroke="#111" stroke-width="2.5"/><path d="M11 1 h1 M14 2 h1 M13 4 h1 M15 5 h1 M12 3 h1" stroke="#1ab0f0" stroke-width="1.5"/></g><g transform="translate(653,176)"><rect x="1" y="1" width="6" height="8" fill="#f08020"/><path d="M3 15 L10 8" stroke="#bbb" stroke-width="2"/><path d="M9 8 a3.5 3.5 0 0 1 5 -6 l-2 3 l2 1 l2 -2 a3.5 3.5 0 0 1 -6 5" fill="#bbb" stroke="#111"/></g><g transform="translate(681,176)"><rect x="9" y="2" width="6" height="4" fill="#2a7ad0" stroke="#111"/><path d="M12 6 v3" stroke="#111"/><path d="M2 10 L6 8 H13 V12 L9 15 H2Z" fill="#aaa" stroke="#111"/></g><g transform="translate(709,176)"><path d="M3 2 h12 M3 5 h12 M3 8 h12 M3 11 h12 M3 14 h12" stroke="#f08020" stroke-width="1.8"/><text x="4" y="13.5" font-size="13" font-weight="bold" font-family="Liberation Sans" fill="#111">P</text></g><g transform="translate(736,176)"><path d="M3 2 h12 M3 5 h12 M3 8 h12 M3 11 h12 M3 14 h12" stroke="#f08020" stroke-width="1.8"/><text x="4" y="13.5" font-size="13" font-weight="bold" font-family="Liberation Sans" fill="#111">A</text></g><g transform="translate(763,176)"><path d="M5 2 h11 M5 6 h11 M5 10 h11 M5 14 h11" stroke="#1ab0f0" stroke-width="2"/><path d="M1 2 h1 M1 6 h1 M1 10 h1 M1 14 h1" stroke="#111" stroke-width="2"/></g><path d="M786.5 172 V194" stroke="#222327"/><path d="M791 175 v18" stroke="#e0e0e0" stroke-width="2" stroke-dasharray="2 2"/><g transform="translate(801,176)"><path d="M1 3 v10 M15 3 v10" stroke="#111" stroke-width="1.5"/><path d="M1 4 h14 M1 12 h14" stroke="#888"/><path d="M2 8 h13" stroke="#1ab0f0" stroke-dasharray="2 1.5" stroke-width="1.3"/></g><g transform="translate(828,176)"><path d="M1 6 L4 3 H15 V11 L12 14 H1Z" fill="#888" stroke="#222"/><path d="M2 9 h10" stroke="#1ab0f0" stroke-dasharray="2 1"/></g><path d="M852.5 172 V194" stroke="#222327"/><g transform="translate(860,176)"><path d="M1 4 L4 1 H9 V6 L6 9 H1Z" fill="#2a7ad0" stroke="#111"/><path d="M11 5 L15 14 H7Z" fill="#888" stroke="#111"/></g><g transform="translate(888,176)"><path d="M1.5 5.5 L5.5 1.5 H14.5 V10.5 L10.5 14.5 H1.5Z M1.5 5.5 H10.5 V14.5 M10.5 5.5 L14.5 1.5" fill="none" stroke="#1ab0f0" stroke-width="1.3"/></g><g transform="translate(915,176)"><path d="M1.5 5.5 L5.5 1.5 H14.5 V10.5 L10.5 14.5 H1.5Z" fill="#1a90d8" stroke="#111"/><path d="M1.5 5.5 H10.5 V14.5 M10.5 5.5 L14.5 1.5" fill="none" stroke="#111"/><path d="M2 6 h8 v8 h-8z" fill="#1ab0f0"/></g><circle cx="950" cy="184" r="8" fill="url(#sph)"/><path d="M967.5 172 V194" stroke="#222327"/><g transform="translate(975,176)"><circle cx="8" cy="8" r="6" fill="url(#sph)"/><path d="M2 5 q6 6 12 4 M5 13 q3 -6 9 -10" stroke="#333" stroke-width="1.2" fill="none"/></g><g transform="translate(15,206)"><path d="M7 3 h9 v3 h-6 v6 h6 v3 h-15 v-3 h6z" fill="#f08020"/></g><g transform="translate(42,206)"><rect x="1" y="2" width="15" height="3" fill="#4a8fd8"/><rect x="7" y="5" width="3" height="7" fill="#c04060"/><rect x="1" y="11" width="15" height="3" fill="#e01010"/></g><g transform="translate(69,206)"><path d="M3 1 h13 v3 h-10 v3 h10 v2 h-13z" fill="#e02020"/><path d="M6 8 h10 v3 h-7 v2 h7 v3 h-10z" fill="#4a7fc0"/></g><path d="M93.5 202 V225" stroke="#222327"/><g transform="translate(102,206)"><rect x="1.5" y="3.5" width="13" height="11" fill="#2a5a90" stroke="#111"/><path d="M3 4 l2 5 l2 -5 l2 5 l2 -5 l2 5" stroke="#8ac" fill="none"/><rect x="2" y="1" width="3" height="2" fill="#111"/><rect x="7" y="1" width="3" height="2" fill="#111"/><rect x="11" y="1" width="3" height="2" fill="#111"/></g><g transform="translate(129,206)"><rect x="4" y="3" width="7" height="12" fill="#5a8ad0" stroke="#111"/><rect x="5" y="1" width="4" height="2" fill="#111"/><path d="M12 6 h3 M12 11 h3" stroke="#e02020"/></g><g transform="translate(155,206)"><ellipse cx="8" cy="10" rx="4.5" ry="5" fill="#e02020" stroke="#111"/><path d="M4 9 h8 M4 12 h8" stroke="#111"/><path d="M8 5 v-3 h3" stroke="#ccc"/></g><g transform="translate(183,206)"><circle cx="8" cy="9" r="6" fill="#4a7ab0" stroke="#111"/><path d="M5 5 L13 9 L5 13Z" fill="#e02020"/><rect x="6" y="1" width="4" height="3" fill="#4a7ab0" stroke="#111"/></g><g transform="translate(210,206)"><rect x="0" y="7" width="5" height="3" fill="#4a8fd8"/><rect x="5" y="4" width="5" height="9" fill="#e02020"/><rect x="10" y="5" width="6" height="7" fill="#5a8ad0" stroke="#111"/></g><g transform="translate(237,206)"><path d="M2 2 l5 4 l-5 4z M12 2 l-5 4 l5 4z" fill="#111"/><path d="M9 3 q5 1 5 7" stroke="#e02020" fill="none"/><rect x="1" y="12" width="15" height="3" fill="#4a8fd8"/></g><g transform="translate(264,206)"><rect x="0" y="7" width="5" height="3" fill="#4a8fd8"/><rect x="5" y="4" width="5" height="9" fill="#e02020"/><rect x="10" y="5" width="6" height="7" fill="#5a8ad0" stroke="#111"/></g><g transform="translate(290,206)"><path d="M1 5 L4 2 H12 V12 L9 15 H1Z" fill="#9a9a9a" stroke="#222"/><path d="M1 5 H9 V15 M9 5 L12 2" fill="none" stroke="#222"/><text x="3" y="13" font-size="8" font-family="Liberation Sans" fill="#222">?</text><rect x="11" y="7" width="5" height="3" fill="#2a9ad8"/></g><g transform="translate(317,206)"><path d="M2 2 h7 l3 3 v9 h-10z" fill="#bbb" stroke="#222"/><path d="M6 10 h6 v-2 l4 3 l-4 3 v-2 h-6z" fill="#2a9ad8" stroke="#123"/></g><path d="M342.5 202 V225" stroke="#222327"/><g transform="translate(351,206)"><rect x="1" y="4" width="15" height="9" rx="2" fill="#4a7ab0" stroke="#111"/><path d="M4 4 q-2 4.5 0 9 M7 4 q-2 4.5 0 9 M10 4 q-2 4.5 0 9 M13 4 q-2 4.5 0 9" stroke="#1ab0f0" fill="none" stroke-width="1.3"/></g><g transform="translate(378,206)"><path d="M3 1 h4 v2 h8 v2 h-12z" fill="#1ab0f0"/><path d="M1 7 h15" stroke="#1ab0f0" stroke-width="1.2" stroke-dasharray="2 1"/><path d="M2 10 h7 v2 h5 v3 h-4 v-2 h-8z" fill="#111"/></g><g transform="translate(405,206)"><rect x="7" y="1" width="3" height="2" fill="#1ab0f0"/><path d="M1 6 h15" stroke="#1ab0f0" stroke-width="1.5" stroke-dasharray="2 1.5"/><path d="M2 9 h8 v3 h4 v3 h-5 v-3 h-7z" fill="#111"/></g><g transform="translate(432,206)"><rect x="1" y="8" width="5" height="6" fill="#aaa" stroke="#222"/><rect x="11" y="7" width="5" height="7" fill="#aaa" stroke="#222"/><path d="M4 15 L9 7 L12 3" stroke="#1ab0f0" stroke-width="1.5" fill="none"/></g><path d="M457.5 202 V225" stroke="#222327"/><g transform="translate(465,206)"><path d="M2 10 a3 3 0 0 1 2 -5 a4 4 0 0 1 7 0 a2.5 2.5 0 0 1 1 5z" fill="#ddd" stroke="#222"/><path d="M10 2 a7 7 0 0 1 2 12" stroke="#1ab0f0" fill="none" stroke-width="1.5"/></g><g transform="translate(492,206)"><path d="M2 14 q1 -9 9 -9" stroke="#1ab0f0" stroke-width="2" fill="none"/><path d="M13 2 v8 M11 2 h4 M11 10 h4 M1 13 v3 M0 14 h5" stroke="#111" stroke-width="1.5"/></g><g transform="translate(519,206)"><circle cx="8" cy="8" r="6.5" fill="none" stroke="#111" stroke-width="1.5"/><path d="M2 6 a6.5 6.5 0 0 1 6 -4.5" stroke="#1ab0f0" stroke-width="1.6" fill="none"/></g><path d="M544.5 202 V225" stroke="#222327"/><g transform="translate(552,206)"><path d="M2 15 L9 8" stroke="#111" stroke-width="3.5"/><path d="M2 15 L9 8" stroke="#bbb" stroke-width="2"/><path d="M8 8 a4 4 0 0 1 5 -6 l-2 3 l1 2 l2 0 l2 -2 a4 4 0 0 1 -6 5" fill="#bbb" stroke="#111"/></g><g transform="translate(579,206)"><path d="M1 15 L11 5" stroke="#111" stroke-width="2.5"/><path d="M11 1 h1 M14 2 h1 M13 4 h1 M15 5 h1 M12 3 h1" stroke="#1ab0f0" stroke-width="1.5"/></g><g transform="translate(606,206)"><rect x="1" y="1" width="6" height="8" fill="#2a7ad0"/><path d="M3 15 L10 8" stroke="#bbb" stroke-width="2"/><path d="M9 8 a3.5 3.5 0 0 1 5 -6 l-2 3 l2 1 l2 -2 a3.5 3.5 0 0 1 -6 5" fill="#bbb" stroke="#111"/></g><g transform="translate(634,206)"><rect x="9" y="2" width="6" height="4" fill="#2a7ad0" stroke="#111"/><path d="M12 6 v3" stroke="#111"/><path d="M2 10 L6 8 H13 V12 L9 15 H2Z" fill="#aaa" stroke="#111"/></g><g transform="translate(661,206)"><path d="M3 2 h12 M3 5 h12 M3 8 h12 M3 11 h12 M3 14 h12" stroke="#3a6ab0" stroke-width="1.8"/><text x="4" y="13.5" font-size="13" font-weight="bold" font-family="Liberation Sans" fill="#111">P</text></g><g transform="translate(689,206)"><path d="M5 2 h11 M5 6 h11 M5 10 h11 M5 14 h11" stroke="#1ab0f0" stroke-width="2"/><path d="M1 2 h1 M1 6 h1 M1 10 h1 M1 14 h1" stroke="#111" stroke-width="2"/></g></svg>
<svg style="left:0;top:257px" width="1920" height="677" viewBox="0 257 1920 677"><defs><linearGradient id="g1" gradientUnits="userSpaceOnUse" x1="697.0" y1="501.0" x2="691.5" y2="510.9"><stop offset="0" stop-color="#00a0a0"/><stop offset="0.25" stop-color="#00d8d8"/><stop offset="0.42" stop-color="#80ffff"/><stop offset="0.55" stop-color="#00e4e4"/><stop offset="0.85" stop-color="#00b8b8"/><stop offset="1" stop-color="#008888"/></linearGradient><linearGradient id="g2" gradientUnits="userSpaceOnUse" x1="674.0" y1="0.0" x2="689.0" y2="0.0"><stop offset="0" stop-color="#009c9c"/><stop offset="0.4" stop-color="#40f0f0"/><stop offset="1" stop-color="#00b0b0"/></linearGradient><linearGradient id="g3" gradientUnits="userSpaceOnUse" x1="809.0" y1="0.0" x2="824.0" y2="0.0"><stop offset="0" stop-color="#900000"/><stop offset="0.4" stop-color="#ff4040"/><stop offset="1" stop-color="#b00000"/></linearGradient><linearGradient id="g4" gradientUnits="userSpaceOnUse" x1="830.5" y1="526.0" x2="824.5" y2="536.7"><stop offset="0" stop-color="#900000"/><stop offset="0.25" stop-color="#d80000"/><stop offset="0.42" stop-color="#ff6060"/><stop offset="0.55" stop-color="#e00000"/><stop offset="0.85" stop-color="#b00000"/><stop offset="1" stop-color="#800000"/></linearGradient><linearGradient id="g5" gradientUnits="userSpaceOnUse" x1="1000.0" y1="236.5" x2="1017.2" y2="266.7"><stop offset="0" stop-color="#00b8b8"/><stop offset="0.12" stop-color="#00d4d4"/><stop offset="0.5" stop-color="#00e2e2"/><stop offset="0.62" stop-color="#50f0f0"/><stop offset="0.72" stop-color="#00dede"/><stop offset="0.92" stop-color="#00c4c4"/><stop offset="1" stop-color="#00a8a8"/></linearGradient><linearGradient id="g6" gradientUnits="userSpaceOnUse" x1="1000.0" y1="292.0" x2="1017.2" y2="322.2"><stop offset="0" stop-color="#0000a8"/><stop offset="0.12" stop-color="#0000cc"/><stop offset="0.5" stop-color="#0000e0"/><stop offset="0.62" stop-color="#4848ff"/><stop offset="0.72" stop-color="#0000dc"/><stop offset="0.92" stop-color="#0000b8"/><stop offset="1" stop-color="#00008c"/></linearGradient><linearGradient id="g7" gradientUnits="userSpaceOnUse" x1="1000.0" y1="348.0" x2="1017.0" y2="377.8"><stop offset="0" stop-color="#b00000"/><stop offset="0.12" stop-color="#d80000"/><stop offset="0.5" stop-color="#e00000"/><stop offset="0.63" stop-color="#ec3030"/><stop offset="0.74" stop-color="#dc0000"/><stop offset="0.92" stop-color="#c40000"/><stop offset="1" stop-color="#a00000"/></linearGradient><linearGradient id="g8" gradientUnits="userSpaceOnUse" x1="1000.0" y1="403.0" x2="1017.6" y2="433.9"><stop offset="0" stop-color="#b05858"/><stop offset="0.12" stop-color="#d06c6c"/><stop offset="0.5" stop-color="#dc7474"/><stop offset="0.6" stop-color="#eaa0a0"/><stop offset="0.7" stop-color="#d87070"/><stop offset="0.92" stop-color="#c06060"/><stop offset="1" stop-color="#a05050"/></linearGradient><linearGradient id="g9" gradientUnits="userSpaceOnUse" x1="902.5" y1="0.0" x2="918.0" y2="0.0"><stop offset="0" stop-color="#a00000"/><stop offset="0.35" stop-color="#ff3030"/><stop offset="0.6" stop-color="#e00000"/><stop offset="1" stop-color="#a00000"/></linearGradient><linearGradient id="g10" gradientUnits="userSpaceOnUse" x1="722.5" y1="0.0" x2="737.0" y2="0.0"><stop offset="0" stop-color="#0000a0"/><stop offset="0.35" stop-color="#3030ff"/><stop offset="0.6" stop-color="#0000e0"/><stop offset="1" stop-color="#0000a0"/></linearGradient><linearGradient id="g11" gradientUnits="userSpaceOnUse" x1="760.0" y1="390.0" x2="752.3" y2="403.6"><stop offset="0" stop-color="#000090"/><stop offset="0.25" stop-color="#0000d8"/><stop offset="0.42" stop-color="#7070ff"/><stop offset="0.55" stop-color="#0000e0"/><stop offset="0.85" stop-color="#0000b0"/><stop offset="1" stop-color="#000070"/></linearGradient><linearGradient id="g12" gradientUnits="userSpaceOnUse" x1="858.0" y1="0.0" x2="874.0" y2="0.0"><stop offset="0" stop-color="#b06060"/><stop offset="0.35" stop-color="#f0a8a8"/><stop offset="0.6" stop-color="#d87474"/><stop offset="1" stop-color="#a85a5a"/></linearGradient><linearGradient id="g13" gradientUnits="userSpaceOnUse" x1="875.0" y1="409.0" x2="867.4" y2="422.8"><stop offset="0" stop-color="#a05050"/><stop offset="0.25" stop-color="#d87070"/><stop offset="0.42" stop-color="#fff0f0"/><stop offset="0.55" stop-color="#e08080"/><stop offset="0.85" stop-color="#c06060"/><stop offset="1" stop-color="#905050"/></linearGradient><linearGradient id="g14" gradientUnits="userSpaceOnUse" x1="863.0" y1="0.0" x2="879.5" y2="0.0"><stop offset="0" stop-color="#00a0a0"/><stop offset="0.35" stop-color="#50f8f8"/><stop offset="0.6" stop-color="#00e0e0"/><stop offset="1" stop-color="#00a0a0"/></linearGradient><linearGradient id="g15" gradientUnits="userSpaceOnUse" x1="1145.5" y1="651.3" x2="1138.2" y2="664.1"><stop offset="0" stop-color="#00a0a0"/><stop offset="0.25" stop-color="#00d8d8"/><stop offset="0.42" stop-color="#80ffff"/><stop offset="0.55" stop-color="#00e4e4"/><stop offset="0.85" stop-color="#00b8b8"/><stop offset="1" stop-color="#008888"/></linearGradient><linearGradient id="vcyl" x1="0" y1="0" x2="1" y2="0"><stop offset="0" stop-color="#b05400"/><stop offset="0.35" stop-color="#e07800"/><stop offset="0.55" stop-color="#f09030"/><stop offset="0.8" stop-color="#d06a00"/><stop offset="1" stop-color="#a85000"/></linearGradient><linearGradient id="vfit" x1="0" y1="0" x2="0" y2="1"><stop offset="0" stop-color="#c86400"/><stop offset="0.4" stop-color="#ffb040"/><stop offset="0.7" stop-color="#e08000"/><stop offset="1" stop-color="#a85000"/></linearGradient><linearGradient id="g16" gradientUnits="userSpaceOnUse" x1="0.0" y1="775.0" x2="4.0" y2="822.0"><stop offset="0" stop-color="#00b8b8"/><stop offset="0.3" stop-color="#00dede"/><stop offset="0.45" stop-color="#70ffff"/><stop offset="0.6" stop-color="#00d8d8"/><stop offset="1" stop-color="#00a8a8"/></linearGradient><linearGradient id="g17" gradientUnits="userSpaceOnUse" x1="0.0" y1="830.0" x2="4.0" y2="877.0"><stop offset="0" stop-color="#0000b0"/><stop offset="0.3" stop-color="#0000e0"/><stop offset="0.45" stop-color="#8080ff"/><stop offset="0.6" stop-color="#0000d8"/><stop offset="1" stop-color="#0000a0"/></linearGradient><linearGradient id="g18" gradientUnits="userSpaceOnUse" x1="0.0" y1="886.0" x2="4.0" y2="930.0"><stop offset="0" stop-color="#b00000"/><stop offset="0.3" stop-color="#e80000"/><stop offset="0.45" stop-color="#ff8080"/><stop offset="0.6" stop-color="#e00000"/><stop offset="1" stop-color="#a00000"/></linearGradient><linearGradient id="g19" gradientUnits="userSpaceOnUse" x1="1894.0" y1="258.0" x2="1876.6" y2="287.9"><stop offset="0" stop-color="#0000c0"/><stop offset="0.2" stop-color="#0000e8"/><stop offset="0.42" stop-color="#9090ff"/><stop offset="0.58" stop-color="#0000f0"/><stop offset="0.9" stop-color="#0000dc"/><stop offset="1" stop-color="#0000c0"/></linearGradient><linearGradient id="g20" gradientUnits="userSpaceOnUse" x1="1797.0" y1="258.0" x2="1779.6" y2="287.9"><stop offset="0" stop-color="#c00000"/><stop offset="0.2" stop-color="#e80000"/><stop offset="0.42" stop-color="#ff9090"/><stop offset="0.58" stop-color="#f00000"/><stop offset="0.9" stop-color="#dc0000"/><stop offset="1" stop-color="#c00000"/></linearGradient><linearGradient id="g21" gradientUnits="userSpaceOnUse" x1="1700.0" y1="258.0" x2="1682.6" y2="287.9"><stop offset="0" stop-color="#c06868"/><stop offset="0.2" stop-color="#e07a7a"/><stop offset="0.42" stop-color="#fff4f4"/><stop offset="0.58" stop-color="#ea8484"/><stop offset="0.9" stop-color="#d87070"/><stop offset="1" stop-color="#c46464"/></linearGradient><mask id="wm" maskUnits="userSpaceOnUse" x="1700" y="250" width="200" height="200"><rect x="1700" y="250" width="200" height="200" fill="#fff"/><path d="M1868.3 370.6 A75.3 75.3 0 0 1 1827.5 411.4 L1816.1 383.8 A45.5 45.5 0 0 0 1840.7 359.2Z" fill="#000"/><path d="M1839.8 358.8 L1869.2 371.0 M1815.7 382.9 L1827.9 412.3 M1781.7 382.9 L1769.5 412.3 M1757.6 358.8 L1728.2 371.0 M1757.6 324.8 L1728.2 312.6 M1781.7 300.7 L1769.5 271.3 M1815.7 300.7 L1827.9 271.3 M1839.8 324.8 L1869.2 312.6 M1753.2 341.8 H1773.7 M1823.7 341.8 H1844.2" stroke="#000" stroke-width="3"/></mask><mask id="wm2" maskUnits="userSpaceOnUse" x="1700" y="250" width="200" height="200"><rect x="1700" y="250" width="200" height="200" fill="#fff"/><path d="M1839.8 358.8 L1869.2 371.0 M1815.7 382.9 L1827.9 412.3 M1781.7 382.9 L1769.5 412.3 M1757.6 358.8 L1728.2 371.0 M1757.6 324.8 L1728.2 312.6 M1781.7 300.7 L1769.5 271.3 M1815.7 300.7 L1827.9 271.3 M1839.8 324.8 L1869.2 312.6 M1753.2 341.8 H1773.7 M1823.7 341.8 H1844.2" stroke="#000" stroke-width="3"/></mask></defs><polygon points="40.0,638.1 706.8,258.0 830.5,258.0 40.0,708.6" fill="#00c6c6" /><polygon points="40.0,652.6 732.2,258.0 805.0,258.0 40.0,694.1" fill="#00e2e2" /><polygon points="690.0,497.1 858.0,590.8 858.0,603.8 690.0,510.1" fill="url(#g1)"/><rect x="674" y="455" width="15" height="25" fill="url(#g2)"/><rect x="809" y="485" width="15" height="30" fill="url(#g3)"/><polygon points="815.0,517.3 900.0,564.9 900.0,578.9 815.0,531.3" fill="url(#g4)"/><polygon points="40.0,783.7 1060.0,202.3 1060.0,242.3 40.0,823.7" fill="url(#g5)"/><polygon points="40.0,839.2 1130.0,217.9 1130.0,257.9 40.0,879.2" fill="url(#g6)"/><polygon points="40.0,895.2 1228.0,218.0 1228.0,257.5 40.0,934.7" fill="url(#g7)"/><polygon points="40.0,950.2 1330.0,214.9 1330.0,255.9 40.0,991.2" fill="url(#g8)"/><g stroke="#00a0a0" stroke-width="1" fill="none"><path d="M650 438 q15 12 12 38"/></g><g stroke="#0000a0" stroke-width="1" fill="none"><path d="M693 466 q18 14 16 40"/><path d="M768 435 q10 12 10 25"/></g><g stroke="#a00000" stroke-width="1" fill="none"><path d="M780 472 q18 14 16 38"/></g><g stroke="#a05050" stroke-width="1" fill="none"><path d="M836 498 q18 14 16 40"/></g><rect x="902.5" y="486" width="15.5" height="86" fill="url(#g9)"/><path d="M895 566 Q898 582 912 580 Q920 576 918 560 L902 560 Z" fill="#e00000"/><circle cx="904" cy="570" r="9" fill="#d80000"/><rect x="722.5" y="392" width="14.5" height="66" fill="url(#g10)"/><path d="M722.5 400 Q721 376 741 378.7 L741 396.7 Q737 396.7 737 400 Z" fill="#0000e0"/><polygon points="736.0,376.4 1098.0,581.6 1098.0,599.6 736.0,394.4" fill="url(#g11)"/><rect x="858" y="424" width="16" height="66" fill="url(#g12)"/><path d="M858 430 Q857 408 876 409.6 L876 427.6 Q874 427.6 874 430 Z" fill="#e48484"/><polygon points="872.0,407.3 1135.0,552.8 1135.0,570.8 872.0,425.3" fill="url(#g13)"/><rect x="863" y="508" width="16.5" height="84" fill="url(#g14)"/><path d="M852 592 Q851 605 868 604 Q880 603 879.5 588 L863 588 Z" fill="#00d4d4"/><path d="M863 524 Q862 499 884 500.5 L884 517.5 Q879.5 517.5 879.5 524 Z" fill="#00e0e0"/><polygon points="878.0,498.6 1152.0,655.0 1152.0,672.0 878.0,515.6" fill="url(#g15)"/><g>
<path d="M1180 640 L1150 622 L1153 613 L1184 630Z" fill="#0000d8"/>
<path d="M1216 616 L1195 603 L1197 597 L1218 609Z" fill="#e08888"/>
<path d="M1087 578 L1112 588 L1116 604 L1090 600 Z" fill="url(#vfit)"/>
<ellipse cx="1090" cy="590" rx="5" ry="10" fill="#d87000"/>
<path d="M1088 568 Q1100 570 1103 585" stroke="#e07400" stroke-width="2.2" fill="none"/>
<path d="M1113.6 611 L1148.3 611 L1148.3 636 Q1131 646 1113.6 636 Z" fill="url(#vcyl)"/>
<ellipse cx="1131" cy="611" rx="17.4" ry="6" fill="#c86200"/>
<path d="M1114 622 Q1131 630 1148 622" stroke="#a85000" stroke-width="1.5" fill="none"/>
<path d="M1126.3 597 L1149.4 597 L1149.4 611 L1126.3 611Z" fill="#b85800"/>
<path d="M1137.9 614 L1163.3 622 L1163 632 L1138 626Z" fill="url(#vfit)"/>
<ellipse cx="1177" cy="636" rx="7" ry="9" fill="url(#vfit)"/>
<path d="M1184 626 Q1195 627 1198 634" stroke="#e07400" stroke-width="2" fill="none"/>
<path d="M1109.5 568.2 L1143.1 550.3 L1161 565.9 L1162.8 584.4 L1159.9 594.8 L1144.8 599.4 L1129.8 599.4 L1118.2 590.2 L1109.5 579.8Z" fill="#cc6400"/>
<path d="M1109.5 568.2 L1143.1 550.3 L1161 565.9 L1128.6 583.2Z" fill="#e27800"/>
<path d="M1128.6 583.2 L1161 565.9 L1162.8 584.4 L1159.9 594.8 L1144.8 599.4 L1130 596Z" fill="#d87000"/>
<path d="M1130 591 Q1146 597 1160 586" stroke="#f09030" stroke-width="1.2" fill="none"/>
<path d="M1158.7 583 L1193.4 583 L1193.4 618 Q1176 628 1158.7 618Z" fill="url(#vcyl)"/>
<path d="M1160 598 Q1176 606 1193 598 M1160 606 Q1176 614 1193 606" stroke="#a85000" stroke-width="1.4" fill="none"/>
<ellipse cx="1176" cy="583" rx="17" ry="6" fill="#c86200"/>
<path d="M1163.3 574 L1170.3 576 L1170.3 592.5 L1163.3 590Z" fill="#f5a030"/>
<path d="M1184.2 590.2 L1207.3 600 L1207.3 613.3 L1184.2 604Z" fill="url(#vfit)"/>
<path d="M1209.6 596 L1227 606 L1227 621.4 L1209.6 612Z" fill="url(#vfit)"/>
<path d="M1210 592 Q1222 593 1226 604" stroke="#e07400" stroke-width="2" fill="none"/>
<path d="M1159.9 558.9 L1161 547.4 L1174.9 538.1 L1196.9 555.5 L1197.5 565.9 L1194 579.8 L1172.6 579.8 L1161 568.2Z" fill="#c86200"/>
<path d="M1161 547.4 L1174.9 538.1 L1196.9 555.5 L1181.9 564.7Z" fill="#e27800"/>
<path d="M1181.9 564.7 L1196.9 555.5 L1197.5 565.9 L1194 579.8 L1180 576Z" fill="#d87000"/>
</g><polygon points="1042.0,789.3 1365.0,603.0 1688.0,789.3 1365.0,976.0" fill="#e07000" /><polygon points="1042.0,789.3 1042.0,799.5 1365.0,986.0 1365.0,976.0" fill="#b45a00" /><polygon points="1688.0,789.3 1688.0,799.5 1365.0,986.0 1365.0,976.0" fill="#cc6600" /><polygon points="1123.0,710.0 1338.0,832.0 1338.0,927.0 1123.0,803.0" fill="#b45a00" /><polygon points="1338.0,832.0 1392.0,832.0 1392.0,927.0 1338.0,927.0" fill="#b35800" /><polygon points="1392.0,832.0 1607.0,710.0 1607.0,803.0 1392.0,927.0" fill="#cc6600" /><polygon points="1123.0,676.0 1338.0,553.0 1392.0,553.0 1607.0,676.0 1607.0,710.0 1392.0,832.0 1338.0,832.0 1123.0,710.0" fill="#e07000" /><g fill="none" stroke="#20c020" stroke-width="1" stroke-dasharray="5 3"><ellipse cx="1432.9" cy="653.7" rx="62" ry="36"/><ellipse cx="1299.2" cy="730.6" rx="61" ry="36"/></g><g fill="none" stroke="#30d030" stroke-width="1"><path d="M1428 650 h10 M1433 645 v10 M1418 658 l8 3"/><path d="M1240 730 L1342 706 L1298 766 Z"/><path d="M1252 731 L1332 712 L1297 757Z" stroke-dasharray="2 2"/><path d="M1264 732 L1322 718 L1296 748Z" stroke-dasharray="2 2"/><path d="M1276 733 L1312 724 L1295 740Z" stroke-dasharray="2 2"/></g><g stroke-width="1.2"><path d="M902.5 258 V326" stroke="#0000ff"/><path d="M868 266.4 L938 306" stroke="#e00000"/><path d="M868 305.6 L938 266.4" stroke="#00d000"/></g><path d="M1366.6 300.4 L1604.2 437.0 L1453.0 523.9 L1215.5 387.3 Z M1337.6 317.0 L1575.2 453.6 M1307.6 334.3 L1545.2 470.9 M1278.6 351.0 L1516.2 487.6 M1249.0 368.0 L1486.6 504.6" fill="none" stroke="#0000ff" stroke-width="1.1"/><path transform="matrix(0.867,0.4985,-0.867,0.4985,1366.6,300.4) translate(67,26.0) scale(1.5444,2.0889)" d="M 0.00 0.00 L 4.00 -9.00 L 8.00 0.00 M 1.50 -3.20 H 6.50 M 12.60 0.00 V -9.00 H 17.40 Q 19.90 -9.00 19.90 -6.80 Q 19.90 -4.60 17.40 -4.60 H 12.60 M 17.40 -4.60 Q 20.40 -4.60 20.40 -2.30 Q 20.40 0.00 17.40 0.00 H 12.60 M 25.70 -4.50 H 31.70 M 40.80 -9.00 Q 44.80 -9.00 44.80 -4.50 Q 44.80 0.00 40.80 0.00 Q 36.80 0.00 36.80 -4.50 Q 36.80 -9.00 40.80 -9.00 M 41.80 -2.20 L 45.00 0.60 M 49.60 0.00 V -9.00 L 54.10 0.00 L 58.60 -9.00 V 0.00 M 69.20 0.00 V -9.00 L 63.20 -3.00 H 71.20 M 76.80 -0.60 V 0.00 M 86.20 -9.00 Q 90.00 -9.00 90.00 -4.50 Q 90.00 0.00 86.20 0.00 Q 82.40 0.00 82.40 -4.50 Q 82.40 -9.00 86.20 -9.00" fill="none" stroke="#00e800" stroke-width="1.25" vector-effect="non-scaling-stroke" stroke-linecap="round" stroke-linejoin="round"/><path transform="matrix(0.867,0.4985,-0.867,0.4985,1366.6,300.4) translate(22,59.4) scale(1.5210,2.0889)" d="M 0.00 0.00 V -9.00 H 3.50 Q 8.00 -9.00 8.00 -4.50 Q 8.00 0.00 3.50 0.00 Z M 12.60 0.00 V -9.00 L 20.10 0.00 V -9.00 M 28.20 -7.50 V -1.50 M 25.20 -4.50 H 31.20 M 36.80 -9.00 H 43.30 L 39.80 -5.40 Q 43.90 -5.40 43.90 -2.70 Q 43.90 0.00 40.30 0.00 Q 37.80 0.00 36.30 -1.60 M 49.00 -6.60 Q 49.10 -9.00 52.50 -9.00 Q 55.90 -9.00 55.90 -6.60 Q 55.90 -4.60 53.30 -3.00 L 48.50 0.00 H 56.10 M 64.20 -7.50 V -1.50 M 61.20 -4.50 H 67.20 M 79.30 -9.00 H 72.30 V 0.00 H 79.30 M 72.30 -4.60 H 77.30 M 83.90 -6.00 L 89.90 0.00 M 89.90 -6.00 L 83.90 0.00 M 96.70 -9.00 V -1.60 Q 96.70 0.00 98.90 0.00 M 94.50 -6.00 H 98.90 M 103.80 -3.20 H 109.80 Q 109.80 -6.00 106.80 -6.00 Q 103.80 -6.00 103.80 -3.00 Q 103.80 0.00 106.80 0.00 Q 108.80 0.00 109.80 -1.20 M 114.50 -6.00 V 0.00 M 114.50 -3.40 Q 115.50 -6.00 118.50 -6.00 M 123.10 -6.00 V 0.00 M 123.10 -4.00 Q 124.10 -6.00 126.40 -6.00 Q 129.10 -6.00 129.10 -4.00 V 0.00 M 139.70 -6.00 V 0.00 M 139.70 -3.00 Q 139.70 -6.00 136.70 -6.00 Q 133.70 -6.00 133.70 -3.00 Q 133.70 0.00 136.70 0.00 Q 139.70 0.00 139.70 -3.00 M 144.80 -9.00 V 0.00" fill="none" stroke="#00e800" stroke-width="1.25" vector-effect="non-scaling-stroke" stroke-linecap="round" stroke-linejoin="round"/><path transform="matrix(0.867,0.4985,-0.867,0.4985,1366.6,300.4) translate(10,94.0) scale(1.6098,2.0889)" d="M 2.20 -9.00 V -1.60 Q 2.20 0.00 4.40 0.00 M 0.00 -6.00 H 4.40 M 9.00 -9.00 V 0.00 M 9.00 -4.00 Q 10.00 -6.00 12.30 -6.00 Q 15.00 -6.00 15.00 -4.00 V 0.00 M 19.60 -6.00 V 0.00 M 19.60 -3.40 Q 20.60 -6.00 23.60 -6.00 M 28.50 -3.20 H 34.50 Q 34.50 -6.00 31.50 -6.00 Q 28.50 -6.00 28.50 -3.00 Q 28.50 0.00 31.50 0.00 Q 33.50 0.00 34.50 -1.20 M 45.20 -6.00 V 0.00 M 45.20 -3.00 Q 45.20 -6.00 42.20 -6.00 Q 39.20 -6.00 39.20 -3.00 Q 39.20 0.00 42.20 0.00 Q 45.20 0.00 45.20 -3.00 M 55.80 -9.00 V 0.00 M 55.80 -3.00 Q 55.80 -6.00 52.80 -6.00 Q 49.80 -6.00 49.80 -3.00 Q 49.80 0.00 52.80 0.00 Q 55.80 0.00 55.80 -3.00 M 72.50 -7.50 V -1.50 M 69.50 -4.50 H 75.50 M 89.20 0.00 L 93.20 -9.00 L 97.20 0.00 M 90.70 -3.20 H 95.70 M 101.80 0.00 V -9.00 L 106.30 0.00 L 110.80 -9.00 V 0.00 M 122.40 -9.00 H 115.40 V 0.00 H 122.40 M 115.40 -4.60 H 120.40 M 136.10 -7.20 L 138.60 -9.00 V 0.00 M 143.70 -7.20 L 146.20 -9.00 V 0.00 M 151.30 -9.00 H 157.80 L 154.30 -5.40 Q 158.40 -5.40 158.40 -2.70 Q 158.40 0.00 154.80 0.00 Q 152.30 0.00 150.80 -1.60" fill="none" stroke="#00e800" stroke-width="1.25" vector-effect="non-scaling-stroke" stroke-linecap="round" stroke-linejoin="round"/><path transform="matrix(0.867,0.4985,-0.867,0.4985,1366.6,300.4) translate(86,127.5) scale(1.6640,2.0889)" d="M 0.00 0.00 V -9.00 L 7.50 0.00 V -9.00 M 12.10 -9.00 V 0.00 H 18.60 M 23.20 -9.00 L 30.70 0.00 M 30.70 -9.00 L 23.20 0.00 M 51.10 -7.60 Q 50.10 -9.00 47.70 -9.00 Q 44.30 -9.00 44.30 -6.80 Q 44.30 -4.60 47.70 -4.60 Q 51.50 -4.60 51.50 -2.30 Q 51.50 0.00 47.90 0.00 Q 44.90 0.00 43.90 -1.60 M 56.10 -9.00 V -3.00 Q 56.10 0.00 59.60 0.00 Q 63.10 0.00 63.10 -3.00 V -9.00" fill="none" stroke="#00e800" stroke-width="1.25" vector-effect="non-scaling-stroke" stroke-linecap="round" stroke-linejoin="round"/><path transform="matrix(0.867,0.4985,-0.867,0.4985,1366.6,300.4) translate(93,161.6) scale(1.7326,2.0889)" d="M 0.00 0.00 V -9.00 H 3.50 Q 8.00 -9.00 8.00 -4.50 Q 8.00 0.00 3.50 0.00 Z M 12.60 0.00 V -9.00 L 20.10 0.00 V -9.00 M 33.80 -9.00 H 40.30 L 36.80 -5.40 Q 40.90 -5.40 40.90 -2.70 Q 40.90 0.00 37.30 0.00 Q 34.80 0.00 33.30 -1.60 M 46.00 -6.60 Q 46.10 -9.00 49.50 -9.00 Q 52.90 -9.00 52.90 -6.60 Q 52.90 -4.60 50.30 -3.00 L 45.50 0.00 H 53.10" fill="none" stroke="#00e800" stroke-width="1.25" vector-effect="non-scaling-stroke" stroke-linecap="round" stroke-linejoin="round"/><path d="M785.0 571.1 L1052.0 724.6 L931.6 793.9 L664.6 640.3 Z M756.0 587.7 L1023.1 741.3 M727.1 604.4 L994.1 757.9 M698.2 621.0 L965.2 774.5" fill="none" stroke="#0000ff" stroke-width="1.1"/><path transform="matrix(0.867,0.4985,-0.867,0.4985,785,571.1) translate(88,26.0) scale(1.5000,2.0889)" d="M 0.00 0.00 L 4.00 -9.00 L 8.00 0.00 M 1.50 -3.20 H 6.50 M 12.60 0.00 V -9.00 H 17.40 Q 19.90 -9.00 19.90 -6.80 Q 19.90 -4.60 17.40 -4.60 H 12.60 M 17.40 -4.60 Q 20.40 -4.60 20.40 -2.30 Q 20.40 0.00 17.40 0.00 H 12.60 M 25.70 -4.50 H 31.70 M 40.80 -9.00 Q 44.80 -9.00 44.80 -4.50 Q 44.80 0.00 40.80 0.00 Q 36.80 0.00 36.80 -4.50 Q 36.80 -9.00 40.80 -9.00 M 41.80 -2.20 L 45.00 0.60 M 49.60 0.00 V -9.00 L 54.10 0.00 L 58.60 -9.00 V 0.00 M 69.20 0.00 V -9.00 L 63.20 -3.00 H 71.20 M 76.80 -0.60 V 0.00 M 86.20 -9.00 Q 90.00 -9.00 90.00 -4.50 Q 90.00 0.00 86.20 0.00 Q 82.40 0.00 82.40 -4.50 Q 82.40 -9.00 86.20 -9.00" fill="none" stroke="#00e800" stroke-width="1.25" vector-effect="non-scaling-stroke" stroke-linecap="round" stroke-linejoin="round"/><path transform="matrix(0.867,0.4985,-0.867,0.4985,785,571.1) translate(41,59.4) scale(1.4728,2.0889)" d="M 0.00 0.00 V -9.00 H 3.50 Q 8.00 -9.00 8.00 -4.50 Q 8.00 0.00 3.50 0.00 Z M 12.60 0.00 V -9.00 L 20.10 0.00 V -9.00 M 28.20 -7.50 V -1.50 M 25.20 -4.50 H 31.20 M 36.80 -9.00 H 43.30 L 39.80 -5.40 Q 43.90 -5.40 43.90 -2.70 Q 43.90 0.00 40.30 0.00 Q 37.80 0.00 36.30 -1.60 M 49.00 -6.60 Q 49.10 -9.00 52.50 -9.00 Q 55.90 -9.00 55.90 -6.60 Q 55.90 -4.60 53.30 -3.00 L 48.50 0.00 H 56.10 M 64.20 -7.50 V -1.50 M 61.20 -4.50 H 67.20 M 79.30 -9.00 H 72.30 V 0.00 H 79.30 M 72.30 -4.60 H 77.30 M 83.90 -6.00 L 89.90 0.00 M 89.90 -6.00 L 83.90 0.00 M 96.70 -9.00 V -1.60 Q 96.70 0.00 98.90 0.00 M 94.50 -6.00 H 98.90 M 103.80 -3.20 H 109.80 Q 109.80 -6.00 106.80 -6.00 Q 103.80 -6.00 103.80 -3.00 Q 103.80 0.00 106.80 0.00 Q 108.80 0.00 109.80 -1.20 M 114.50 -6.00 V 0.00 M 114.50 -3.40 Q 115.50 -6.00 118.50 -6.00 M 123.10 -6.00 V 0.00 M 123.10 -4.00 Q 124.10 -6.00 126.40 -6.00 Q 129.10 -6.00 129.10 -4.00 V 0.00 M 139.70 -6.00 V 0.00 M 139.70 -3.00 Q 139.70 -6.00 136.70 -6.00 Q 133.70 -6.00 133.70 -3.00 Q 133.70 0.00 136.70 0.00 Q 139.70 0.00 139.70 -3.00 M 144.80 -9.00 V 0.00" fill="none" stroke="#00e800" stroke-width="1.25" vector-effect="non-scaling-stroke" stroke-linecap="round" stroke-linejoin="round"/><path transform="matrix(0.867,0.4985,-0.867,0.4985,785,571.1) translate(9,92.8) scale(1.5982,2.0889)" d="M 2.20 -9.00 V -1.60 Q 2.20 0.00 4.40 0.00 M 0.00 -6.00 H 4.40 M 9.00 -9.00 V 0.00 M 9.00 -4.00 Q 10.00 -6.00 12.30 -6.00 Q 15.00 -6.00 15.00 -4.00 V 0.00 M 19.60 -6.00 V 0.00 M 19.60 -3.40 Q 20.60 -6.00 23.60 -6.00 M 28.50 -3.20 H 34.50 Q 34.50 -6.00 31.50 -6.00 Q 28.50 -6.00 28.50 -3.00 Q 28.50 0.00 31.50 0.00 Q 33.50 0.00 34.50 -1.20 M 45.20 -6.00 V 0.00 M 45.20 -3.00 Q 45.20 -6.00 42.20 -6.00 Q 39.20 -6.00 39.20 -3.00 Q 39.20 0.00 42.20 0.00 Q 45.20 0.00 45.20 -3.00 M 55.80 -9.00 V 0.00 M 55.80 -3.00 Q 55.80 -6.00 52.80 -6.00 Q 49.80 -6.00 49.80 -3.00 Q 49.80 0.00 52.80 0.00 Q 55.80 0.00 55.80 -3.00 M 72.50 -7.50 V -1.50 M 69.50 -4.50 H 75.50 M 89.20 0.00 V -9.00 L 96.70 0.00 V -9.00 M 104.30 -6.00 Q 107.30 -6.00 107.30 -3.00 Q 107.30 0.00 104.30 0.00 Q 101.30 0.00 101.30 -3.00 Q 101.30 -6.00 104.30 -6.00 M 111.90 -6.00 L 114.90 0.00 L 117.90 -6.00 M 125.50 -6.00 Q 128.50 -6.00 128.50 -3.00 Q 128.50 0.00 125.50 0.00 Q 122.50 0.00 122.50 -3.00 Q 122.50 -6.00 125.50 -6.00 M 140.70 -7.40 Q 139.70 -9.00 137.10 -9.00 Q 133.10 -9.00 133.10 -4.50 Q 133.10 0.00 137.10 0.00 Q 139.70 0.00 140.70 -1.60 M 148.30 -6.00 Q 151.30 -6.00 151.30 -3.00 Q 151.30 0.00 148.30 0.00 Q 145.30 0.00 145.30 -3.00 Q 145.30 -6.00 148.30 -6.00 M 155.90 -6.00 V 0.00 M 155.90 -4.00 Q 156.90 -6.00 159.20 -6.00 Q 161.90 -6.00 161.90 -4.00 V 0.00 M 182.30 -7.60 Q 181.30 -9.00 178.90 -9.00 Q 175.50 -9.00 175.50 -6.80 Q 175.50 -4.60 178.90 -4.60 Q 182.70 -4.60 182.70 -2.30 Q 182.70 0.00 179.10 0.00 Q 176.10 0.00 175.10 -1.60" fill="none" stroke="#00e800" stroke-width="1.25" vector-effect="non-scaling-stroke" stroke-linecap="round" stroke-linejoin="round"/><path transform="matrix(0.867,0.4985,-0.867,0.4985,785,571.1) translate(113,126.1) scale(1.5631,2.0889)" d="M 0.00 0.00 V -9.00 H 3.50 Q 8.00 -9.00 8.00 -4.50 Q 8.00 0.00 3.50 0.00 Z M 12.60 0.00 V -9.00 L 20.10 0.00 V -9.00 M 33.80 -9.00 H 40.30 L 36.80 -5.40 Q 40.90 -5.40 40.90 -2.70 Q 40.90 0.00 37.30 0.00 Q 34.80 0.00 33.30 -1.60 M 46.00 -6.60 Q 46.10 -9.00 49.50 -9.00 Q 52.90 -9.00 52.90 -6.60 Q 52.90 -4.60 50.30 -3.00 L 45.50 0.00 H 53.10" fill="none" stroke="#00e800" stroke-width="1.25" vector-effect="non-scaling-stroke" stroke-linecap="round" stroke-linejoin="round"/><g stroke="#0000ff" stroke-width="1.1" fill="none"><path d="M1344.6 462.4 L1197 577"/><path d="M941.2 661.4 L1120 617.5"/></g><polygon points="0,622 35,629 35,690 0,684" fill="#00c4c4"/><polygon points="0,640 35,646 35,672 0,666" fill="#00e0e0"/><path d="M0 773 Q18 775 36 788 L36 822 Q18 816 0 814 Z" fill="url(#g16)"/><path d="M0 828.4 Q18 830 36 843.5 L36 876.5 Q18 872 0 869.8 Z" fill="url(#g17)"/><path d="M0 884.2 Q18 886 36 898.5 L36 932.3 Q18 925 0 921.3 Z" fill="url(#g18)"/><polygon points="1600.0,87.5 1920.0,273.1 1920.0,313.1 1600.0,127.5" fill="url(#g19)"/><polygon points="1600.0,143.7 1920.0,329.3 1920.0,369.3 1600.0,183.7" fill="url(#g20)"/><polygon points="1600.0,200.0 1920.0,385.6 1920.0,425.6 1600.0,240.0" fill="url(#g21)"/><g mask="url(#wm)"><circle cx="1798.7" cy="341.8" r="60.4" fill="none" stroke="#ffffff" stroke-opacity="0.43" stroke-width="27.799999999999997"/><circle cx="1798.7" cy="341.8" r="35.25" fill="none" stroke="#ffffff" stroke-opacity="0.43" stroke-width="16.5"/></g><path mask="url(#wm2)" d="M1867.3 370.2 A74.3 74.3 0 0 1 1827.1 410.4 L1816.5 384.8 A46.5 46.5 0 0 0 1841.7 359.6Z" fill="#0090c8" opacity="0.6"/><g fill="none" stroke="#d8d8d8" stroke-width="1" opacity="0.55"><path d="M1783.7 336.8 L1798.7 328.8 L1813.7 336.8 L1813.7 353.8 L1798.7 361.8 L1783.7 353.8Z M1798.7 319.8 V341.8 L1783.7 353.8 M1798.7 341.8 L1813.7 336.8"/></g><rect x="1884.5" y="267.5" width="25" height="25" fill="#ffffff" fill-opacity="0.36" stroke="#b0b0b0" stroke-opacity="0.7"/><rect x="1884.5" y="298.5" width="25" height="25" fill="#ffffff" fill-opacity="0.36" stroke="#b0b0b0" stroke-opacity="0.7"/><rect x="1884.5" y="329.5" width="25" height="25" fill="#ffffff" fill-opacity="0.36" stroke="#b0b0b0" stroke-opacity="0.7"/><rect x="1884.5" y="360.5" width="25" height="25" fill="#ffffff" fill-opacity="0.36" stroke="#b0b0b0" stroke-opacity="0.7"/><rect x="1884.5" y="391.5" width="25" height="25" fill="#ffffff" fill-opacity="0.36" stroke="#b0b0b0" stroke-opacity="0.7"/><path d="M1890 285 v-7 l7-6 l7 6 v7z" fill="none" stroke="#3a3b40" stroke-width="1.2"/><path d="M1892 315 a6 6 0 1 1 5 5" fill="none" stroke="#5a6a80" stroke-width="1.2"/><path d="M1890 313 l4 -3 l1 5z" fill="#2a90c0"/><text x="1889.5" y="347" font-size="11" font-family="Liberation Sans" fill="#3a3a3a">90</text><path d="M1903 377 a6 6 0 1 0 -5 5" fill="none" stroke="#5a6a80" stroke-width="1.2"/><path d="M1905 375 l-4 -3 l-1 5z" fill="#2a90c0"/><rect x="1895.5" y="395.5" width="3" height="4" fill="#3a3a3a" transform="rotate(0 1897 403.5)"/><rect x="1895.5" y="395.5" width="3" height="4" fill="#3a3a3a" transform="rotate(45 1897 403.5)"/><rect x="1895.5" y="395.5" width="3" height="4" fill="#3a3a3a" transform="rotate(90 1897 403.5)"/><rect x="1895.5" y="395.5" width="3" height="4" fill="#3a3a3a" transform="rotate(135 1897 403.5)"/><rect x="1895.5" y="395.5" width="3" height="4" fill="#3a3a3a" transform="rotate(180 1897 403.5)"/><rect x="1895.5" y="395.5" width="3" height="4" fill="#3a3a3a" transform="rotate(225 1897 403.5)"/><rect x="1895.5" y="395.5" width="3" height="4" fill="#3a3a3a" transform="rotate(270 1897 403.5)"/><rect x="1895.5" y="395.5" width="3" height="4" fill="#3a3a3a" transform="rotate(315 1897 403.5)"/><circle cx="1897" cy="403.5" r="5.5" fill="#3a3a3a"/><circle cx="1897" cy="403.5" r="2" fill="#6a6b70"/></svg>
<div style="left:35px;top:278px;width:613px;height:659px;background:#f0f0f0;border:1px solid #8c8c8c;box-sizing:border-box"></div>
<div style="left:36px;top:279px;width:611px;height:29px;background:#fff"></div>
<svg style="left:42px;top:283px" width="18" height="18" viewBox="0 0 18 18">
<g fill="none" stroke="#0a0a8a" stroke-width="2.6"><path d="M5 6 L9 2.5 L12 5.5 L15 3"/><path d="M2 9 L6 6 L12 11"/><path d="M4 14 L8 10.5 L11 13.5 L15 11"/></g>
<g fill="none" stroke="#000" stroke-width="0.8" opacity="0.6"><path d="M5 6 L9 2.5 L12 5.5 L15 3"/><path d="M2 9 L6 6 L12 11"/><path d="M4 14 L8 10.5 L11 13.5 L15 11"/></g></svg>
<span class="tx" style="left:64.40px;top:287.01px;font-size:12px;color:#000;transform:scaleX(0.9655);">FLM - Element Properties</span>
<svg style="left:627px;top:286px" width="12" height="12"><path d="M1 1 L11 11 M11 1 L1 11" stroke="#000" stroke-width="1.1"/></svg>
<span class="tx" style="left:55.75px;top:325.00px;font-size:11px;color:#000;transform:scaleX(0.9498);">Type:</span>
<span class="tx" style="left:51.75px;top:349.00px;font-size:11px;color:#000;transform:scaleX(0.9121);">Name:</span>
<span class="tx" style="left:45.25px;top:373.00px;font-size:11px;color:#000;transform:scaleX(0.9074);">System:</span>
<span class="tx" style="left:42.25px;top:397.00px;font-size:11px;color:#000;transform:scaleX(0.9259);">Number:</span>
<div style="left:86px;top:318px;width:221px;height:20px;background:#f0f0f0;border-top:1px solid #a0a0a0;border-left:1px solid #a0a0a0;border-bottom:1px solid #fff;border-right:1px solid #fff;box-sizing:border-box"></div>
<div style="left:86px;top:342px;width:221px;height:20px;background:#f0f0f0;border-top:1px solid #a0a0a0;border-left:1px solid #a0a0a0;border-bottom:1px solid #fff;border-right:1px solid #fff;box-sizing:border-box"></div>
<div style="left:86px;top:367px;width:90px;height:21px;background:#fff;border:1px solid #7a7a7a;box-sizing:border-box"></div>
<svg style="left:162px;top:375px" width="10" height="6"><path d="M1 1 L5 5 L9 1" fill="none" stroke="#333" stroke-width="1.1"/></svg>
<div style="left:182px;top:367px;width:125px;height:20px;background:#f0f0f0;border-top:1px solid #a0a0a0;border-left:1px solid #a0a0a0;border-bottom:1px solid #fff;border-right:1px solid #fff;box-sizing:border-box"></div>
<div style="left:86px;top:391px;width:45px;height:20px;background:#f0f0f0;border-top:1px solid #a0a0a0;border-left:1px solid #a0a0a0;border-bottom:1px solid #fff;border-right:1px solid #fff;box-sizing:border-box"></div>
<span class="tx" style="left:139.30px;top:397.00px;font-size:11px;color:#000;transform:scaleX(0.9462);">Elevation [m]:</span>
<div style="left:208px;top:391px;width:45px;height:21px;background:#e1e1e1;border:1px solid #adadad;box-sizing:border-box"></div>
<svg style="left:238.5px;top:399px" width="10" height="6"><path d="M1 1 L5 5 L9 1" fill="none" stroke="#333" stroke-width="1.1"/></svg>
<div style="left:254px;top:391px;width:54px;height:21px;background:#fff;border:1px solid #7a7a7a;box-sizing:border-box"></div>
<span class="tx" style="left:91.00px;top:323.00px;font-size:11px;color:#000;transform:scaleX(0.9579);">AB-QM 4.0</span>
<span class="tx" style="left:91.00px;top:348.00px;font-size:11px;color:#000;transform:scaleX(0.9637);">Pressure Independent Control Valve</span>
<span class="tx" style="left:89.50px;top:372.00px;font-size:11px;color:#000;transform:scaleX(0.8606);">C1</span>
<span class="tx" style="left:187.40px;top:372.00px;font-size:11px;color:#000;transform:scaleX(0.9481);">Cooling Secondary</span>
<span class="tx" style="left:212.30px;top:396.00px;font-size:11px;color:#000;transform:scaleX(0.9368);">CP</span>
<span class="tx" style="left:278.30px;top:396.00px;font-size:11px;color:#000;transform:scaleX(0.9486);">9.191</span>
<div style="left:43px;top:420px;width:263px;height:264px;background:#f0f0f0;border-top:1px solid #a0a0a0;border-left:1px solid #a0a0a0;border-right:1px solid #fff;border-bottom:1px solid #fff;box-sizing:border-box"></div>
<div style="left:45px;top:422px;width:260px;height:261px;background:#fff"></div>
<div style="left:47px;top:423px;width:256px;height:256px;background:#000;border-left:1px solid #808080;border-top:1px solid #808080"></div>
<svg style="left:45px;top:420px" width="262" height="263" viewBox="45 420 262 263">
<defs><g id="vw"><g fill="none" stroke="#00e400" stroke-width="1.05" stroke-linejoin="round" stroke-linecap="round">
<path d="M152.8 483.9 L216.1 453.2 L273.2 500.8 L211.7 530.3 Z"/>
<path d="M181 492 Q182 476 210 471 Q244 468 246 488 Q247 506 222 511 Q186 515 181 492 Z"/>
<path d="M201 447 Q214 442 231 448 Q260 468 273 484 Q284 502 283 520 Q283 540 274 555 Q262 568 240 574 Q215 579 192 572 Q160 562 140 552 Q130 546 129 535 L129 492 Q130 482 140 476"/>
<path d="M205 450 Q226 450 240 462 L270 488 Q279 500 279 518 Q279 538 270 552"/>
<path d="M136.5 500 L135.2 549 Q150 560 172 565 Q200 573 214 574"/>
<path d="M141 478 Q138 486 143 492 L211.7 530.3 L220.5 541.6 L220.5 560"/>
<path d="M132.7 482 L140 478 L152.8 483.9"/>
<path d="M136.5 504 L172.9 526 L172.9 560"/>
<path d="M132.7 525.3 L172.9 547.9 L210 560"/>
<path d="M172.9 526 Q176 520 180 518 L211.7 530.3"/>
<path d="M231.8 539 L231.8 547.9 L260.6 546.6 M275.7 517.8 L231.8 539 M211.7 530.3 L231.8 539 L260 538"/>
<path d="M172.9 534 Q200 548 220.5 550 Q250 552 278 538"/>
<path d="M140 539.1 L212.9 562.6 M140 550.8 L171.3 570.4 M171.9 530 V570 M212.3 562.6 V582 M212.9 573 Q245 570 277 551 M212.9 577 Q245 574 274 557"/>
<path d="M101.4 486.4 L210.5 445 M104 495 L148 478 M110 500 L130 514 M115 503 L133 516 M131 480 L150 472 L160 468"/>
<path d="M145 466 L165 458 L175 470 L156 478 Z M125 478 L140 472 L146 480 L131 486 Z M176 452 L200 444 L206 454 L182 462 Z"/>
<path d="M190 452 L196 448 L200 456 M150 472 l6 -3 l3 6"/>
<rect x="66.9" y="487" width="34.5" height="8.8" rx="4.4"/>
<rect x="91.3" y="472" width="40.2" height="8.2" rx="4.1"/>
<rect x="132.1" y="455.1" width="32.6" height="8.8" rx="4.4"/>
<path d="M101 484 l4 -2 l3 12 l-4 2z M131 470 l5 -2 l3 10 l-5 2z M164 455 l5 -2 l3 9 l-5 2z" stroke-width="1.6"/>
<path d="M241 521 l10 -4 l5 2 l-8 6z M257 537 l6 -3 l1 6 l-5 2z" stroke-width="1.5"/>
<path d="M159.5 578 L170 571.7 L183 576 L182 586 L168 590 L160 586 Z" stroke-width="1.5"/>
<path d="M168.6 591.2 L175.2 619.8 L183 621.1 L196 597.7 M175 600 L190 594 M183 621 L200 614"/>
<rect x="203.8" y="582" width="32.6" height="6.6" rx="3"/>
<path d="M207 583 v5 M210 583 v5 M213 583 v5 M216 583 v5 M219 583 v5 M222 583 v5 M225 583 v5 M228 583 v5 M231 583 v5"/>
<ellipse cx="216.2" cy="599.6" rx="17.6" ry="8.5" stroke-width="1.6"/>
<ellipse cx="216.2" cy="598.5" rx="11" ry="5" />
<path d="M198.6 604 Q199 622 206 630 Q216 636 228.5 631 Q232 620 233.7 604"/>
<path d="M202 612 Q216 620 232 612 M205 622 Q216 628 230 622 M210 600 L205 630 M222 606 L226 632"/>
<ellipse cx="243.5" cy="621.1" rx="8.5" ry="14.3"/>
<ellipse cx="243.5" cy="621.6" rx="5.2" ry="10.4"/>
<path d="M231.1 602.9 L248 606.8 M231 637 L244 636"/>
<path d="M190.1 632 Q190 650 200 658 Q217 665 236 658 Q244 650 244.2 632"/>
<path d="M190.5 636 Q217 646 244 636 M191 640 Q217 650 243.5 640 M192 645 Q217 655 242 645 M194 650 Q217 660 240 650 M190 632 Q217 626 244 632"/>
</g></g></defs><use href="#vw"/><use href="#vw" transform="translate(1.6 1.4)" opacity="0.75"/>
<g fill="none" stroke="#e8d000" stroke-width="1">
<path d="M254.6 614.6 L274.1 622.4 L253.3 638.1 M274.1 626.4 L287.1 631.6 M265 631.6 L279.3 637.4"/>
<path d="M254 640 L268 646.5 L273 643 L270 638 L262 636"/>
</g></svg>
<div style="left:98px;top:684px;width:48px;height:19px;background:#f0f0f0;border:1px solid #d9d9d9;border-top:none;box-sizing:border-box"></div>
<div style="left:43px;top:683px;width:55px;height:22px;background:#fff;border-left:1px solid #d9d9d9;border-right:1px solid #d9d9d9;box-sizing:border-box"></div>
<span class="tx" style="left:51.30px;top:691.00px;font-size:11px;color:#000;transform:scaleX(0.9648);">3D Slide</span>
<span class="tx" style="left:103.70px;top:689.01px;font-size:11px;color:#000;transform:scaleX(0.9527);">2D Slide</span>
<svg style="left:43px;top:709px" width="13" height="13"><rect x="0.5" y="0.5" width="12" height="12" fill="#fff" stroke="#333"/><path d="M2.5 6.5 L5.2 9.2 L10.5 3.5" fill="none" stroke="#222" stroke-width="1.3"/></svg>
<span class="tx" style="left:58.24px;top:711.01px;font-size:11px;color:#000;transform:scaleX(0.9608);">Include in listings</span>
<svg style="left:170px;top:713px" width="13" height="13"><rect x="0.5" y="0.5" width="12" height="12" fill="#fff" stroke="#333"/><path d="M2.5 6.5 L5.2 9.2 L10.5 3.5" fill="none" stroke="#222" stroke-width="1.3"/></svg>
<span class="tx" style="left:186.20px;top:716.00px;font-size:11px;color:#000;transform:scaleX(0.9503);">Automatic sizing</span>
<span class="tx" style="left:325.00px;top:325.01px;font-size:11px;color:#000;transform:scaleX(0.9888);">Manufactr.:</span>
<span class="tx" style="left:327.75px;top:349.00px;font-size:11px;color:#000;transform:scaleX(0.9596);">Datasheet:</span>
<span class="tx" style="left:332.25px;top:373.00px;font-size:11px;color:#000;transform:scaleX(0.9175);">Comment:</span>
<div style="left:383px;top:318px;width:222px;height:20px;background:#f0f0f0;border-top:1px solid #a0a0a0;border-left:1px solid #a0a0a0;border-bottom:1px solid #fff;border-right:1px solid #fff;box-sizing:border-box"></div>
<span class="tx" style="left:388.00px;top:323.00px;font-size:11px;color:#000;transform:scaleX(0.9684);">DANFOSS_2023</span>
<div style="left:383px;top:342px;width:81px;height:20px;background:#f0f0f0;border-top:1px solid #a0a0a0;border-left:1px solid #a0a0a0;border-bottom:1px solid #fff;border-right:1px solid #fff;box-sizing:border-box"></div>
<div style="left:470px;top:343px;width:64px;height:19px;background:#cccccc;border:1px solid #bfbfbf;box-sizing:border-box"></div>
<div style="left:540px;top:343px;width:64px;height:19px;background:#cccccc;border:1px solid #bfbfbf;box-sizing:border-box"></div>
<span class="tx" style="left:479.70px;top:348.00px;font-size:11px;color:#838383;transform:scaleX(0.9156);">Pricelist...</span>
<span class="tx" style="left:543.30px;top:348.00px;font-size:11px;color:#838383;transform:scaleX(0.9653);">Datasheet...</span>
<div style="left:383px;top:367px;width:222px;height:21px;background:#fff;border:1px solid #7a7a7a;box-sizing:border-box"></div>
<svg style="left:590px;top:375px" width="10" height="6"><path d="M1 1 L5 5 L9 1" fill="none" stroke="#333" stroke-width="1.1"/></svg>
<div style="left:317px;top:420px;width:326px;height:482px;background:#f0f0f0;border-left:1px solid #fff;border-top:1px solid #fff;border-right:2px solid #a0a0a0;border-bottom:2px solid #a0a0a0;box-sizing:border-box"></div>
<div style="left:341px;top:420px;width:300px;height:1px;background:#fff"></div>
<div style="left:434px;top:402px;width:43px;height:18px;background:#f0f0f0;border-left:1px solid #fff;border-top:1px solid #fff;border-right:2px solid #a0a0a0;box-sizing:border-box"></div>
<div style="left:384px;top:402px;width:51px;height:18px;background:#f0f0f0;border-left:1px solid #fff;border-top:1px solid #fff;border-right:2px solid #a0a0a0;box-sizing:border-box"></div>
<div style="left:317px;top:399px;width:68px;height:22px;background:#f0f0f0;border-left:1px solid #fff;border-top:1px solid #fff;border-right:2px solid #a0a0a0;box-sizing:border-box"></div>
<span class="tx" style="left:324.00px;top:405.00px;font-size:11px;color:#000;transform:scaleX(0.9241);">Parameters</span>
<span class="tx" style="left:388.70px;top:403.00px;font-size:11px;color:#000;transform:scaleX(0.9757);">Actuator</span>
<span class="tx" style="left:442.00px;top:403.00px;font-size:11px;color:#000;transform:scaleX(0.9239);">Flows</span>
<span class="tx" style="left:329.00px;top:440.01px;font-size:11px;color:#000;transform:scaleX(0.9405);">Diameter (DN):</span>
<div style="left:475px;top:435px;width:90px;height:20px;background:#fff;border:1px solid #7a7a7a;box-sizing:border-box"></div>
<span class="tx" style="left:478.50px;top:440.01px;font-size:11px;color:#000;transform:scaleX(0.9490);">32</span>
<svg style="left:551px;top:442px" width="10" height="6"><path d="M1 1 L5 5 L9 1" fill="none" stroke="#333" stroke-width="1.1"/></svg>
<span class="tx" style="left:329.00px;top:463.00px;font-size:11px;color:#000;transform:scaleX(0.9581);">Connector:</span>
<div style="left:475px;top:459px;width:97px;height:20px;background:#fff;border:1px solid #7a7a7a;box-sizing:border-box"></div>
<span class="tx" style="left:478.50px;top:463.00px;font-size:11px;color:#000;transform:scaleX(0.9465);">External thread</span>
<svg style="left:557.5px;top:466px" width="10" height="6"><path d="M1 1 L5 5 L9 1" fill="none" stroke="#333" stroke-width="1.1"/></svg>
<svg style="left:329px;top:484px" width="13" height="13"><rect x="0.5" y="0.5" width="12" height="12" fill="#f0f0f0" stroke="#bcbcbc"/><path d="M2.5 6.5 L5.2 9.2 L10.5 3.5" fill="none" stroke="#bcbcbc" stroke-width="1.3"/></svg>
<span class="tx" style="left:346.00px;top:485.00px;font-size:11px;color:#8d8d8d;transform:scaleX(0.9595);">Test plugs</span>
<span class="tx" style="left:329.50px;top:531.00px;font-size:11px;color:#000;transform:scaleX(0.9569);">Nom. flow Qnom (100%) [l/h]:</span>
<div style="left:475px;top:526px;width:66px;height:19px;background:#f0f0f0;border-top:1px solid #a0a0a0;border-left:1px solid #a0a0a0;border-bottom:1px solid #fff;border-right:1px solid #fff;box-sizing:border-box"></div>
<span class="tx" style="left:478.50px;top:531.00px;font-size:11px;color:#000;transform:scaleX(0.9650);">3600</span>
<span class="tx" style="left:329.50px;top:555.01px;font-size:11px;color:#000;transform:scaleX(0.9704);">Max. flow Qmax [l/h]:</span>
<div style="left:475px;top:550px;width:66px;height:19px;background:#f0f0f0;border-top:1px solid #a0a0a0;border-left:1px solid #a0a0a0;border-bottom:1px solid #fff;border-right:1px solid #fff;box-sizing:border-box"></div>
<span class="tx" style="left:478.50px;top:555.01px;font-size:11px;color:#000;transform:scaleX(0.9650);">3600</span>
<span class="tx" style="left:329.50px;top:580.01px;font-size:11px;color:#000;transform:scaleX(0.9584);">Setting flow range [%]</span>
<div style="left:475px;top:575px;width:90px;height:19px;background:#f0f0f0;border-top:1px solid #a0a0a0;border-left:1px solid #a0a0a0;border-bottom:1px solid #fff;border-right:1px solid #fff;box-sizing:border-box"></div>
<span class="tx" style="left:478.50px;top:580.01px;font-size:11px;color:#000;transform:scaleX(0.9668);">10-100</span>
<span class="tx" style="left:329.50px;top:604.01px;font-size:11px;color:#000;transform:scaleX(0.9647);">Min. dP [kPa]:</span>
<div style="left:475px;top:599px;width:90px;height:19px;background:#f0f0f0;border-top:1px solid #a0a0a0;border-left:1px solid #a0a0a0;border-bottom:1px solid #fff;border-right:1px solid #fff;box-sizing:border-box"></div>
<span class="tx" style="left:478.50px;top:604.01px;font-size:11px;color:#000;transform:scaleX(0.9490);">20</span>
<span class="tx" style="left:329.50px;top:628.01px;font-size:11px;color:#000;transform:scaleX(0.9654);">Max. dP [kPa]:</span>
<div style="left:475px;top:623px;width:66px;height:19px;background:#f0f0f0;border-top:1px solid #a0a0a0;border-left:1px solid #a0a0a0;border-bottom:1px solid #fff;border-right:1px solid #fff;box-sizing:border-box"></div>
<span class="tx" style="left:478.50px;top:628.01px;font-size:11px;color:#000;transform:scaleX(0.9597);">600</span>
<span class="tx" style="left:329.50px;top:653.01px;font-size:11px;color:#000;transform:scaleX(0.9472);">Pressure stage PN</span>
<div style="left:475px;top:648px;width:66px;height:19px;background:#f0f0f0;border-top:1px solid #a0a0a0;border-left:1px solid #a0a0a0;border-bottom:1px solid #fff;border-right:1px solid #fff;box-sizing:border-box"></div>
<span class="tx" style="left:478.50px;top:653.01px;font-size:11px;color:#000;transform:scaleX(0.9490);">25</span>
<span class="tx" style="left:329.50px;top:677.00px;font-size:11px;color:#000;transform:scaleX(0.9549);">Medium work temperature [°C]</span>
<div style="left:475px;top:672px;width:90px;height:19px;background:#f0f0f0;border-top:1px solid #a0a0a0;border-left:1px solid #a0a0a0;border-bottom:1px solid #fff;border-right:1px solid #fff;box-sizing:border-box"></div>
<span class="tx" style="left:478.50px;top:677.00px;font-size:11px;color:#000;transform:scaleX(0.9445);">(-10) + 2 ... +95</span>
<span class="tx" style="left:329.50px;top:725.01px;font-size:11px;color:#000;transform:scaleX(0.9662);">Material (valve body)</span>
<div style="left:475px;top:721px;width:150px;height:19px;background:#f0f0f0;border-top:1px solid #a0a0a0;border-left:1px solid #a0a0a0;border-bottom:1px solid #fff;border-right:1px solid #fff;box-sizing:border-box"></div>
<span class="tx" style="left:478.50px;top:725.01px;font-size:11px;color:#000;transform:scaleX(0.9532);">DZR Bras</span>
<span class="tx" style="left:329.50px;top:749.00px;font-size:11px;color:#000;transform:scaleX(0.9646);">Thread / flange size (d):</span>
<div style="left:475px;top:745px;width:90px;height:19px;background:#f0f0f0;border-top:1px solid #a0a0a0;border-left:1px solid #a0a0a0;border-bottom:1px solid #fff;border-right:1px solid #fff;box-sizing:border-box"></div>
<span class="tx" style="left:478.50px;top:749.00px;font-size:11px;color:#000;transform:scaleX(0.9866);">G 1 1/2 A</span>
<span class="tx" style="left:329.50px;top:774.00px;font-size:11px;color:#000;transform:scaleX(0.9371);">Length (L):</span>
<div style="left:475px;top:770px;width:66px;height:19px;background:#f0f0f0;border-top:1px solid #a0a0a0;border-left:1px solid #a0a0a0;border-bottom:1px solid #fff;border-right:1px solid #fff;box-sizing:border-box"></div>
<span class="tx" style="left:478.50px;top:774.00px;font-size:11px;color:#000;transform:scaleX(0.9597);">130</span>
<span class="tx" style="left:329.50px;top:798.01px;font-size:11px;color:#000;transform:scaleX(0.9419);">Height (H1):</span>
<div style="left:475px;top:794px;width:66px;height:19px;background:#f0f0f0;border-top:1px solid #a0a0a0;border-left:1px solid #a0a0a0;border-bottom:1px solid #fff;border-right:1px solid #fff;box-sizing:border-box"></div>
<span class="tx" style="left:478.50px;top:798.01px;font-size:11px;color:#000;transform:scaleX(0.9863);">64.5</span>
<span class="tx" style="left:329.50px;top:823.00px;font-size:11px;color:#000;transform:scaleX(0.9419);">Height (H2):</span>
<div style="left:475px;top:818px;width:66px;height:19px;background:#f0f0f0;border-top:1px solid #a0a0a0;border-left:1px solid #a0a0a0;border-bottom:1px solid #fff;border-right:1px solid #fff;box-sizing:border-box"></div>
<span class="tx" style="left:478.50px;top:823.00px;font-size:11px;color:#000;transform:scaleX(0.9597);">138</span>
<span class="tx" style="left:329.50px;top:871.00px;font-size:11px;color:#000;transform:scaleX(0.9437);">Code No.</span>
<div style="left:475px;top:867px;width:90px;height:19px;background:#f0f0f0;border-top:1px solid #a0a0a0;border-left:1px solid #a0a0a0;border-bottom:1px solid #fff;border-right:1px solid #fff;box-sizing:border-box"></div>
<span class="tx" style="left:478.50px;top:871.00px;font-size:11px;color:#000;transform:scaleX(0.9914);">003Z8207</span>
<div style="left:379px;top:907px;width:67px;height:21px;background:#e1e1e1;border:2px solid #0078d7;box-sizing:border-box"></div>
<div style="left:452px;top:907px;width:73px;height:21px;background:#e1e1e1;border:1px solid #adadad;box-sizing:border-box"></div>
<div style="left:532px;top:907px;width:73px;height:21px;background:#e1e1e1;border:1px solid #adadad;box-sizing:border-box"></div>
<div style="left:613px;top:907px;width:25px;height:21px;background:#e1e1e1;border:1px solid #adadad;box-sizing:border-box"></div>
<span class="tx" style="left:405.40px;top:913.00px;font-size:11px;color:#000;transform:scaleX(0.9181);">OK</span>
<span class="tx" style="left:472.00px;top:913.00px;font-size:11px;color:#000;transform:scaleX(0.9942);">Cancel</span>
<span class="tx" style="left:557.20px;top:913.00px;font-size:11px;color:#000;transform:scaleX(0.9775);">Help</span>
<span class="tx" style="left:619.70px;top:913.00px;font-size:11px;color:#000;transform:scaleX(0.8854);">&gt;&gt;</span>
</body></html>
